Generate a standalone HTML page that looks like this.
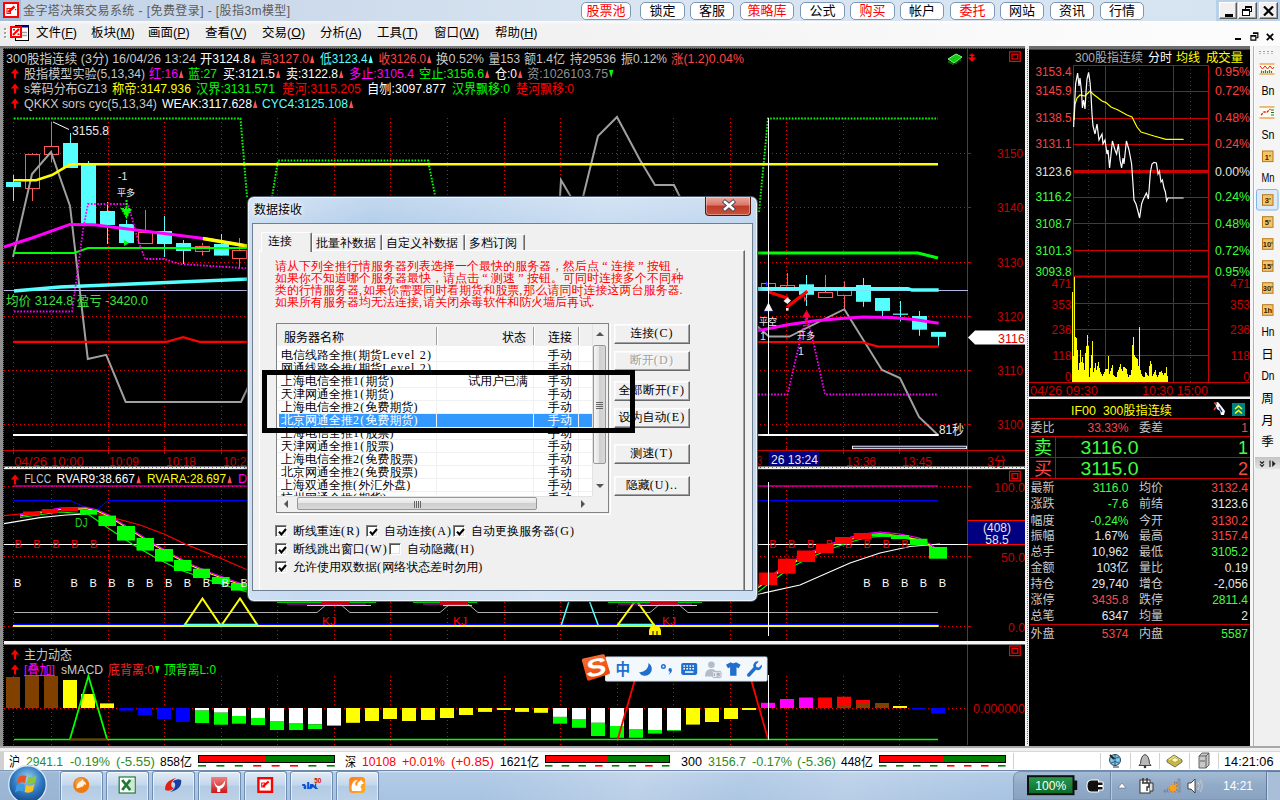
<!DOCTYPE html>
<html lang="zh-CN"><head><meta charset="utf-8"><title>金字塔决策交易系统</title>
<style>
html,body{margin:0;padding:0}
body{width:1280px;height:800px;overflow:hidden;position:relative;background:#000;font-family:"Liberation Sans","Noto Sans CJK SC",sans-serif}
.abs{position:absolute}
i.abs{display:block}

#tb{position:absolute;z-index:3;left:0;top:0;width:1280px;height:21px;background:linear-gradient(90deg,#c2d2e7 0,#ccdaeb 300px,#d9e5f1 640px,#d6e3f1 1216px,#b9d0e9 1216px,#b9d0e9 1280px)}
.ttl{font-size:12px;color:#5c5c5c;line-height:21px;white-space:nowrap;letter-spacing:0.42px}
.tbtn{top:1.5px;height:16px;border:1px solid #7d97b5;border-radius:5px;background:#fff;font-size:13px;line-height:16px;text-align:center;color:#000;white-space:nowrap}
.tbtn.red{color:#f00}
.wc{top:2px;width:18px;height:17px;box-sizing:border-box;border:1px solid;border-color:#fff #5a5a5a #5a5a5a #fff;background:#f0f0f0;box-shadow:inset -1px -1px 0 #a0a0a0}
.wc i{position:absolute;display:block}
#mb{position:absolute;z-index:3;left:0;top:21px;width:1280px;height:25px;background:linear-gradient(rgba(255,255,255,.7) 0,rgba(255,255,255,0) 4px),linear-gradient(90deg,#ededed 0,#f2f2f2 45%,#fbfbfb 85%,#fcfcfc 100%);box-sizing:border-box}
.mi{top:0;font-size:12.5px;line-height:25px;color:#000;white-space:nowrap}

#dlg{position:absolute;z-index:3;left:247px;top:196px;width:511px;height:406px;box-sizing:border-box;border:1px solid #4a5a6a;border-radius:7px;
 background:linear-gradient(100deg,rgba(255,255,255,.35) 0,rgba(255,255,255,0) 22%,rgba(255,255,255,.28) 62%,rgba(255,255,255,.1) 100%),linear-gradient(180deg,#c3d8ef 0,#b4cfeb 26px,#bcd3ec 200px,#c6daf0 405px);box-shadow:inset 0 0 0 1px #eef5fc, 0 0 6px rgba(0,0,0,.5)}
.dt{left:6px;top:6px;font:12px/15px "Liberation Sans","Noto Sans CJK SC",sans-serif;color:#000;text-shadow:0 0 6px #fff,0 0 6px #fff}
.dx{left:457px;top:0px;width:46px;height:19px;border:1px solid #4b1a14;border-top:0;border-radius:0 0 4px 4px;box-sizing:border-box;
 background:linear-gradient(#e9a99b 0,#d9766a 45%,#c23a28 50%,#c8543a 100%);box-shadow:inset 0 0 0 1px rgba(255,255,255,.35);overflow:hidden}
.dx svg{position:absolute;left:-1px;top:-1px}
#dc{position:absolute;left:4px;top:26px;width:499px;height:366px;background:#f0f0f0;border:1px solid #6f7f90;overflow:hidden;box-sizing:content-box;
 font-family:"Liberation Serif","WenQuanYi Zen Hei Sharp","Noto Serif CJK SC",serif;font-size:12px;color:#000}
.page{background:#f0f0f0;border:1px solid;border-color:#fff #696969 #696969 #fff;box-sizing:border-box;box-shadow:inset -1px -1px 0 #a0a0a0}
.tab{border:1px solid;border-color:#fff #696969 #f0f0f0 #fff;border-bottom:0;background:#f0f0f0;box-sizing:border-box;box-shadow:inset -1px 0 0 #a0a0a0;border-radius:2px 2px 0 0}
.tab.act{background:#f0f0f0;z-index:2}
.tab span{position:absolute;white-space:nowrap;line-height:13px}
.rt{color:#f00;line-height:11.9px;white-space:nowrap;font-size:12px;letter-spacing:0px}
.lv{border:1px solid #828282;background:#fff;overflow:hidden;box-shadow:0 0 0 1px #f0f0f0, 1px 1px 0 1px #fff}
.lh{background:#f0f0f0;border-bottom:1px solid #fff;box-sizing:border-box}
.s{white-space:nowrap;line-height:13px}
.hd{font-family:"Liberation Sans","Noto Sans CJK SC",sans-serif;font-size:12px}
.row{left:0;width:315px;overflow:hidden}
.vs{background:#f0f0f0;border-left:1px solid #e3e3e3;box-sizing:border-box}
.hs{background:#f0f0f0;border-top:1px solid #e3e3e3;box-sizing:border-box}
.arr{width:0;height:0;display:block}
.thumb{border:1px solid #979797;border-radius:2px;background:linear-gradient(90deg,#f5f5f5,#e3e3e3 50%,#cfcfcf 50%,#d8d8d8);box-sizing:border-box}
.thumbh{border:1px solid #979797;border-radius:2px;background:linear-gradient(#f5f5f5,#e3e3e3 50%,#cfcfcf 50%,#d8d8d8);box-sizing:border-box}
.btn{width:76px;height:20px;box-sizing:border-box;background:#f0f0f0;border:1px solid;border-color:#fff #696969 #696969 #fff;box-shadow:inset -1px -1px 0 #a0a0a0,inset 1px 1px 0 #f8f8f8;
 text-align:center;line-height:17px;white-space:nowrap}
.btn.dis{color:#a0a0a0;text-shadow:1px 1px 0 #fff}
.a{letter-spacing:1.2px}
.q{display:inline-block;width:12px;text-align:center}
.cb{height:13px;white-space:nowrap}
.cb .box{position:absolute;left:0;top:0;width:10px;height:10px;border:1px solid;border-color:#808080 #fff #fff #808080;background:#fff;box-shadow:inset 1px 1px 0 #505050,inset -1px -1px 0 #e0e0e0}
.cb .lbl{position:absolute;left:18px;top:0px;line-height:13px}
#ann{position:absolute;z-index:4;left:262px;top:370px;width:363px;height:53px;border:5px solid #000;background:transparent;overflow:hidden;
 font-family:"Liberation Serif","WenQuanYi Zen Hei Sharp","Noto Serif CJK SC",serif;font-size:12px;color:#000;box-sizing:content-box}
.row.sel{background:#3399ff;color:#fff;left:2px;width:313px}
.row.sel .s{margin-left:-2px}

#tk{position:absolute;z-index:3;left:0;top:770px;width:1280px;height:30px;background:linear-gradient(115deg,rgba(255,255,255,0) 38%,rgba(255,255,255,.22) 50%,rgba(255,255,255,.05) 58%,rgba(255,255,255,.18) 66%,rgba(255,255,255,0) 78%),linear-gradient(#dbe7f3 0,#b3cbe6 2px,#adc7e4 50%,#a8c3e1 100%);border-top:1px solid #6d89ab;box-sizing:border-box}
.tkb{top:0;width:43px;height:30px;box-sizing:border-box;border:1px solid #6f8db3;border-bottom:0;border-radius:3px 3px 0 0;background:linear-gradient(#e0ebf6,#c3d6ea 45%,#b3cbe4 50%,#bcd2e8);box-shadow:inset 0 0 0 1px rgba(255,255,255,.6)}
</style></head>
<body>
<svg class="abs" style="left:0;top:0;z-index:1" width="1280" height="800" viewBox="0 0 1280 800" font-family='"Liberation Sans","Noto Sans CJK SC",sans-serif' font-size="13">
<rect x="0" y="46" width="1280" height="701" fill="#000"/>
<rect x="0" y="46" width="3" height="701" fill="#909090"/>
<rect x="0" y="45.7" width="1253" height="2.6" fill="#787878"/>
<rect x="1029" y="46" width="221" height="3.6" fill="#6e6e6e"/>
<line x1="3" y1="48.5" x2="1027" y2="48.5" stroke="#ff2020" stroke-width="1" stroke-dasharray="1 1"/>
<line x1="3.5" y1="48" x2="3.5" y2="745" stroke="#ff2020" stroke-width="1" stroke-dasharray="1 1"/>
<line x1="967.5" y1="49" x2="967.5" y2="745" stroke="#e00000" stroke-width="1" />
<rect x="4" y="466.5" width="1022" height="2.7" fill="#f0f0f0"/>
<line x1="4" y1="467.5" x2="1025" y2="467.5" stroke="#ff2020" stroke-width="1" stroke-dasharray="1 3"/>
<rect x="4" y="641" width="1022" height="3.5" fill="#f4f4f4"/>
<rect x="1025" y="46" width="4" height="701" fill="#f0f0f0"/>
<line x1="1027.5" y1="49" x2="1027.5" y2="745" stroke="#ff2020" stroke-width="1" stroke-dasharray="1 1"/>
<rect x="1028.5" y="396.5" width="224" height="2.5" fill="#f0f0f0"/>
<rect x="1250" y="46" width="3.4" height="701" fill="#f6f6f6"/>
<line x1="1253.7" y1="46" x2="1253.7" y2="747" stroke="#c4c4c4" stroke-width="1" />
<text x="6" y="63" fill="#c8c8c8" textLength="190" lengthAdjust="spacingAndGlyphs">300股指连续 (3分) 16/04/26 13:24</text>
<text x="200" y="63" fill="#fff" textLength="50" lengthAdjust="spacingAndGlyphs">开3124.8</text>
<path d="M251 63 l2.2 -8 l2.2 8 z" fill="#ff5050"/>
<text x="260" y="63" fill="#ff4646" textLength="49" lengthAdjust="spacingAndGlyphs">高3127.0</text>
<path d="M310 63 l2.2 -8 l2.2 8 z" fill="#ff5050"/>
<text x="320" y="63" fill="#55ffff" textLength="47.5" lengthAdjust="spacingAndGlyphs">低3123.4</text>
<path d="M368.5 63 l2.2 -8 l2.2 8 z" fill="#55ffff"/>
<text x="378.5" y="63" fill="#ff4646" textLength="47.5" lengthAdjust="spacingAndGlyphs">收3126.0</text>
<path d="M427 63 l2.2 -8 l2.2 8 z" fill="#ff5050"/>
<text x="436" y="63" fill="#c8c8c8" textLength="48" lengthAdjust="spacingAndGlyphs">换0.52%</text>
<text x="488.5" y="63" fill="#c8c8c8" textLength="31.5" lengthAdjust="spacingAndGlyphs">量153</text>
<text x="524" y="63" fill="#c8c8c8" textLength="41" lengthAdjust="spacingAndGlyphs">额1.4亿</text>
<text x="570" y="63" fill="#c8c8c8" textLength="46" lengthAdjust="spacingAndGlyphs">持29536</text>
<text x="621" y="63" fill="#c8c8c8" textLength="46" lengthAdjust="spacingAndGlyphs">振0.12%</text>
<text x="671" y="63" fill="#ff4646" textLength="73" lengthAdjust="spacingAndGlyphs">涨(1.2)0.04%</text>
<path d="M15 78.5 v-6" stroke="#f00" stroke-width="2.2"/><path d="M10.8 73.6 l4.2 -5 l4.2 5 z" fill="#f00"/>
<text x="24" y="78" fill="#c8c8c8" textLength="121" lengthAdjust="spacingAndGlyphs">股指模型实验(5,13,34)</text>
<text x="149" y="78" fill="#ff00ff" textLength="29" lengthAdjust="spacingAndGlyphs">红:16</text>
<path d="M179 78 l2.2 -8 l2.2 8 z" fill="#ff5050"/>
<text x="188" y="78" fill="#00ff00" textLength="29" lengthAdjust="spacingAndGlyphs">蓝:27</text>
<text x="223" y="78" fill="#fff" textLength="52" lengthAdjust="spacingAndGlyphs">买:3121.5</text>
<path d="M276 78 l2.2 -8 l2.2 8 z" fill="#ff5050"/>
<text x="286" y="78" fill="#fff" textLength="52" lengthAdjust="spacingAndGlyphs">卖:3122.8</text>
<path d="M339 78 l2.2 -8 l2.2 8 z" fill="#ff5050"/>
<text x="349" y="78" fill="#ff00ff" textLength="65" lengthAdjust="spacingAndGlyphs">多止:3105.4</text>
<text x="419" y="78" fill="#00ff00" textLength="65" lengthAdjust="spacingAndGlyphs">空止:3156.6</text>
<path d="M485 78 l2.2 -8 l2.2 8 z" fill="#ff5050"/>
<text x="495" y="78" fill="#fff" textLength="22" lengthAdjust="spacingAndGlyphs">仓:0</text>
<path d="M518 78 l2.2 -8 l2.2 8 z" fill="#ff5050"/>
<text x="527" y="78" fill="#909090" textLength="81" lengthAdjust="spacingAndGlyphs">资:1026103.75</text>
<path d="M609 70 l2.2 8 l2.2 -8 z" fill="#00ff00"/>
<path d="M15 93.5 v-6" stroke="#f00" stroke-width="2.2"/><path d="M10.8 88.6 l4.2 -5 l4.2 5 z" fill="#f00"/>
<text x="24" y="93" fill="#c8c8c8" textLength="83" lengthAdjust="spacingAndGlyphs">s筹码分布GZ13</text>
<text x="112" y="93" fill="#ffff00" textLength="79" lengthAdjust="spacingAndGlyphs">称帝:3147.936</text>
<text x="196" y="93" fill="#00ff00" textLength="79" lengthAdjust="spacingAndGlyphs">汉界:3131.571</text>
<text x="282" y="93" fill="#ff0000" textLength="79" lengthAdjust="spacingAndGlyphs">楚河:3115.205</text>
<text x="367" y="93" fill="#fff" textLength="79" lengthAdjust="spacingAndGlyphs">自刎:3097.877</text>
<text x="452" y="93" fill="#00ff00" textLength="58" lengthAdjust="spacingAndGlyphs">汉界飘移:0</text>
<text x="516" y="93" fill="#ff0000" textLength="58" lengthAdjust="spacingAndGlyphs">楚河飘移:0</text>
<path d="M15 108.5 v-6" stroke="#f00" stroke-width="2.2"/><path d="M10.8 103.6 l4.2 -5 l4.2 5 z" fill="#f00"/>
<text x="24" y="108" fill="#c8c8c8" textLength="133" lengthAdjust="spacingAndGlyphs">QKKX sors cyc(5,13,34)</text>
<text x="162" y="108" fill="#fff" textLength="90" lengthAdjust="spacingAndGlyphs">WEAK:3117.628</text>
<path d="M253 108 l2.2 -8 l2.2 8 z" fill="#ff5050"/>
<text x="262" y="108" fill="#55ffff" textLength="86" lengthAdjust="spacingAndGlyphs">CYC4:3125.108</text>
<path d="M349 108 l2.2 -8 l2.2 8 z" fill="#ff5050"/>
<g transform="translate(947,52)"><path d="M1 7 L9 2 L15 5 L7 11 Z" fill="#1c1" stroke="#7f7" stroke-width="1"/><path d="M2 9 l0 2 M4 10 l0 2 M6 11 l0 2 M9 10 l0 2 M11 8.5 l0 2 M13 7 l0 2" stroke="#0c0"/></g>
<path d="M972 53.5 v6 M969.5 55.3 h5" stroke="#f00" stroke-width="1.6"/><path d="M968 57.6 h8 l-4 4.4 z" fill="#f00"/>
<rect x="1009.6" y="51.8" width="10.6" height="9.6" fill="none" stroke="#ff0000" stroke-width="1.2"/>
<rect x="1012" y="54.2" width="5.8" height="4.8" fill="none" stroke="#ff0000" stroke-width="1.2"/>
<line x1="13.5" y1="118" x2="13.5" y2="451" stroke="#e60000" stroke-width="1" stroke-dasharray="1 3"/>
<line x1="51.5" y1="118" x2="51.5" y2="451" stroke="#e60000" stroke-width="1" stroke-dasharray="1 3"/>
<line x1="108.5" y1="118" x2="108.5" y2="451" stroke="#e60000" stroke-width="1" stroke-dasharray="1 3"/>
<line x1="164.5" y1="118" x2="164.5" y2="451" stroke="#e60000" stroke-width="1" stroke-dasharray="1 3"/>
<line x1="221.5" y1="118" x2="221.5" y2="451" stroke="#e60000" stroke-width="1" stroke-dasharray="1 3"/>
<line x1="277.5" y1="118" x2="277.5" y2="451" stroke="#e60000" stroke-width="1" stroke-dasharray="1 3"/>
<line x1="334.5" y1="118" x2="334.5" y2="451" stroke="#e60000" stroke-width="1" stroke-dasharray="1 3"/>
<line x1="390.5" y1="118" x2="390.5" y2="451" stroke="#e60000" stroke-width="1" stroke-dasharray="1 3"/>
<line x1="447.5" y1="118" x2="447.5" y2="451" stroke="#e60000" stroke-width="1" stroke-dasharray="1 3"/>
<line x1="504.5" y1="118" x2="504.5" y2="451" stroke="#e60000" stroke-width="1" stroke-dasharray="1 3"/>
<line x1="560.5" y1="118" x2="560.5" y2="451" stroke="#e60000" stroke-width="1" stroke-dasharray="1 3"/>
<line x1="617.5" y1="118" x2="617.5" y2="451" stroke="#e60000" stroke-width="1" stroke-dasharray="1 3"/>
<line x1="673.5" y1="118" x2="673.5" y2="451" stroke="#e60000" stroke-width="1" stroke-dasharray="1 3"/>
<line x1="730.5" y1="118" x2="730.5" y2="451" stroke="#e60000" stroke-width="1" stroke-dasharray="1 3"/>
<line x1="786.5" y1="118" x2="786.5" y2="451" stroke="#e60000" stroke-width="1" stroke-dasharray="1 3"/>
<line x1="843.5" y1="118" x2="843.5" y2="451" stroke="#e60000" stroke-width="1" stroke-dasharray="1 3"/>
<line x1="899.5" y1="118" x2="899.5" y2="451" stroke="#e60000" stroke-width="1" stroke-dasharray="1 3"/>
<line x1="4" y1="153.5" x2="968" y2="153.5" stroke="#e60000" stroke-width="1" stroke-dasharray="1 3"/>
<text x="997" y="158" fill="#c80000" textLength="26" lengthAdjust="spacingAndGlyphs">3150</text>
<line x1="967" y1="153.5" x2="971" y2="153.5" stroke="#c80000" stroke-width="1" />
<line x1="4" y1="207.5" x2="968" y2="207.5" stroke="#e60000" stroke-width="1" stroke-dasharray="1 3"/>
<text x="997" y="212" fill="#c80000" textLength="26" lengthAdjust="spacingAndGlyphs">3140</text>
<line x1="967" y1="207.5" x2="971" y2="207.5" stroke="#c80000" stroke-width="1" />
<line x1="4" y1="262.5" x2="968" y2="262.5" stroke="#e60000" stroke-width="1" stroke-dasharray="1 3"/>
<text x="997" y="267" fill="#c80000" textLength="26" lengthAdjust="spacingAndGlyphs">3130</text>
<line x1="967" y1="262.5" x2="971" y2="262.5" stroke="#c80000" stroke-width="1" />
<line x1="4" y1="316.5" x2="968" y2="316.5" stroke="#e60000" stroke-width="1" stroke-dasharray="1 3"/>
<text x="997" y="321" fill="#c80000" textLength="26" lengthAdjust="spacingAndGlyphs">3120</text>
<line x1="967" y1="316.5" x2="971" y2="316.5" stroke="#c80000" stroke-width="1" />
<line x1="4" y1="370.5" x2="968" y2="370.5" stroke="#e60000" stroke-width="1" stroke-dasharray="1 3"/>
<text x="997" y="375" fill="#c80000" textLength="26" lengthAdjust="spacingAndGlyphs">3110</text>
<line x1="967" y1="370.5" x2="971" y2="370.5" stroke="#c80000" stroke-width="1" />
<line x1="4" y1="424.5" x2="968" y2="424.5" stroke="#e60000" stroke-width="1" stroke-dasharray="1 3"/>
<text x="997" y="429" fill="#c80000" textLength="26" lengthAdjust="spacingAndGlyphs">3100</text>
<line x1="967" y1="424.5" x2="971" y2="424.5" stroke="#c80000" stroke-width="1" />
<line x1="4" y1="450.5" x2="1025" y2="450.5" stroke="#c80000" stroke-width="1" />
<line x1="13.5" y1="448" x2="13.5" y2="454" stroke="#c80000" stroke-width="1" />
<line x1="108.5" y1="448" x2="108.5" y2="454" stroke="#c80000" stroke-width="1" />
<line x1="164.5" y1="448" x2="164.5" y2="454" stroke="#c80000" stroke-width="1" />
<line x1="221.5" y1="448" x2="221.5" y2="454" stroke="#c80000" stroke-width="1" />
<line x1="277.5" y1="448" x2="277.5" y2="454" stroke="#c80000" stroke-width="1" />
<line x1="334.5" y1="448" x2="334.5" y2="454" stroke="#c80000" stroke-width="1" />
<line x1="390.5" y1="448" x2="390.5" y2="454" stroke="#c80000" stroke-width="1" />
<line x1="447.5" y1="448" x2="447.5" y2="454" stroke="#c80000" stroke-width="1" />
<line x1="504.5" y1="448" x2="504.5" y2="454" stroke="#c80000" stroke-width="1" />
<line x1="560.5" y1="448" x2="560.5" y2="454" stroke="#c80000" stroke-width="1" />
<line x1="617.5" y1="448" x2="617.5" y2="454" stroke="#c80000" stroke-width="1" />
<line x1="673.5" y1="448" x2="673.5" y2="454" stroke="#c80000" stroke-width="1" />
<line x1="730.5" y1="448" x2="730.5" y2="454" stroke="#c80000" stroke-width="1" />
<line x1="786.5" y1="448" x2="786.5" y2="454" stroke="#c80000" stroke-width="1" />
<line x1="843.5" y1="448" x2="843.5" y2="454" stroke="#c80000" stroke-width="1" />
<line x1="899.5" y1="448" x2="899.5" y2="454" stroke="#c80000" stroke-width="1" />
<text x="14" y="465.6" fill="#c80000" textLength="70" lengthAdjust="spacingAndGlyphs">04/26 10:00</text>
<text x="109" y="465.6" fill="#c80000" textLength="30" lengthAdjust="spacingAndGlyphs">10:09</text>
<text x="166" y="465.6" fill="#c80000" textLength="30" lengthAdjust="spacingAndGlyphs">10:18</text>
<text x="223" y="465.6" fill="#c80000" textLength="30" lengthAdjust="spacingAndGlyphs">10:27</text>
<text x="846" y="465.6" fill="#c80000" textLength="30" lengthAdjust="spacingAndGlyphs">13:36</text>
<text x="902" y="465.6" fill="#c80000" textLength="30" lengthAdjust="spacingAndGlyphs">13:45</text>
<text x="987" y="465.6" fill="#c80000" textLength="19" lengthAdjust="spacingAndGlyphs">3分</text>
<rect x="768.6" y="451" width="51" height="15" fill="#000080"/>
<text x="771" y="464" fill="#e8e8e8" textLength="47" lengthAdjust="spacingAndGlyphs">26 13:24</text>
<text x="757" y="465" fill="#c80000" textLength="5" lengthAdjust="spacingAndGlyphs">3</text>
<line x1="13.5" y1="175" x2="13.5" y2="201" stroke="#55ffff" stroke-width="1" />
<rect x="6" y="182" width="15" height="5" fill="#55ffff"/>
<line x1="32.5" y1="153" x2="32.5" y2="154.5" stroke="#ff5a5a" stroke-width="1" />
<line x1="32.5" y1="188.5" x2="32.5" y2="201" stroke="#ff5a5a" stroke-width="1" />
<rect x="25.5" y="154.5" width="14" height="34" fill="none" stroke="#ff5a5a" stroke-width="1"/>
<line x1="51.5" y1="121.6" x2="51.5" y2="146.5" stroke="#ff5a5a" stroke-width="1" />
<line x1="51.5" y1="154.5" x2="51.5" y2="162" stroke="#ff5a5a" stroke-width="1" />
<rect x="44.5" y="146.5" width="14" height="8" fill="none" stroke="#ff5a5a" stroke-width="1"/>
<line x1="70.5" y1="133" x2="70.5" y2="168" stroke="#55ffff" stroke-width="1" />
<rect x="63" y="143" width="15" height="25" fill="#55ffff"/>
<line x1="88.5" y1="161" x2="88.5" y2="224" stroke="#55ffff" stroke-width="1" />
<rect x="81" y="163" width="15" height="61" fill="#55ffff"/>
<line x1="107.5" y1="202" x2="107.5" y2="244" stroke="#55ffff" stroke-width="1" />
<rect x="100" y="211" width="15" height="14" fill="#55ffff"/>
<line x1="126.5" y1="220" x2="126.5" y2="243" stroke="#55ffff" stroke-width="1" />
<rect x="119" y="224" width="15" height="19" fill="#55ffff"/>
<line x1="145.5" y1="210" x2="145.5" y2="232" stroke="#ff5a5a" stroke-width="1" />
<rect x="138.5" y="232.5" width="14" height="11" fill="none" stroke="#ff5a5a" stroke-width="1"/>
<line x1="164.5" y1="216" x2="164.5" y2="257" stroke="#55ffff" stroke-width="1" />
<rect x="157" y="231" width="15" height="13" fill="#55ffff"/>
<line x1="183.5" y1="240" x2="183.5" y2="264" stroke="#55ffff" stroke-width="1" />
<rect x="176" y="243" width="15" height="8" fill="#55ffff"/>
<line x1="202.5" y1="243" x2="202.5" y2="245.5" stroke="#ff5a5a" stroke-width="1" />
<line x1="202.5" y1="250.5" x2="202.5" y2="255.6" stroke="#ff5a5a" stroke-width="1" />
<rect x="195.5" y="246.5" width="14" height="5" fill="none" stroke="#ff5a5a" stroke-width="1"/>
<line x1="221.5" y1="234" x2="221.5" y2="255.6" stroke="#55ffff" stroke-width="1" />
<rect x="214" y="244" width="15" height="11.6" fill="#55ffff"/>
<line x1="239.5" y1="238" x2="239.5" y2="250" stroke="#ff5a5a" stroke-width="1" />
<line x1="239.5" y1="258" x2="239.5" y2="268.7" stroke="#ff5a5a" stroke-width="1" />
<rect x="232.5" y="250.5" width="14" height="8" fill="none" stroke="#ff5a5a" stroke-width="1"/>
<line x1="768.5" y1="281" x2="768.5" y2="283.3" stroke="#ff5a5a" stroke-width="1" />
<rect x="761.5" y="283.5" width="14" height="5" fill="none" stroke="#ff5a5a" stroke-width="1"/>
<line x1="787.5" y1="273" x2="787.5" y2="285.4" stroke="#ff5a5a" stroke-width="1" />
<rect x="780.5" y="285.5" width="14" height="2" fill="none" stroke="#ff5a5a" stroke-width="1"/>
<line x1="806.5" y1="275" x2="806.5" y2="306" stroke="#55ffff" stroke-width="1" />
<rect x="799" y="284.3" width="15" height="10.5" fill="#55ffff"/>
<line x1="825.5" y1="275" x2="825.5" y2="292.3" stroke="#ff5a5a" stroke-width="1" />
<rect x="818.5" y="292.5" width="14" height="5" fill="none" stroke="#ff5a5a" stroke-width="1"/>
<line x1="844.5" y1="281.3" x2="844.5" y2="290.4" stroke="#ff5a5a" stroke-width="1" />
<line x1="844.5" y1="295.6" x2="844.5" y2="309.2" stroke="#ff5a5a" stroke-width="1" />
<rect x="837.5" y="290.5" width="14" height="5" fill="none" stroke="#ff5a5a" stroke-width="1"/>
<line x1="863.5" y1="278" x2="863.5" y2="306.8" stroke="#55ffff" stroke-width="1" />
<rect x="856" y="285" width="15" height="16.8" fill="#55ffff"/>
<line x1="882.5" y1="298" x2="882.5" y2="316.6" stroke="#55ffff" stroke-width="1" />
<rect x="875" y="298" width="15" height="12.9" fill="#55ffff"/>
<line x1="900.5" y1="301" x2="900.5" y2="321.5" stroke="#55ffff" stroke-width="1" />
<rect x="893" y="313.6" width="15" height="1.2" fill="#55ffff"/>
<line x1="919.5" y1="311" x2="919.5" y2="335.8" stroke="#55ffff" stroke-width="1" />
<rect x="912" y="316" width="15" height="13.7" fill="#55ffff"/>
<line x1="938.5" y1="331.9" x2="938.5" y2="346" stroke="#55ffff" stroke-width="1" />
<rect x="931" y="331.9" width="15" height="4.9" fill="#55ffff"/>
<polyline points="13,257 32,174 51,152 70,206 87.8,359 106.2,354.8 125.7,402 241,402 250,383" fill="none" stroke="#a0a0a0" stroke-width="2" />
<polyline points="560,197 561,180 571,197" fill="none" stroke="#a0a0a0" stroke-width="2" />
<polyline points="583,197 598,136 617,117 640,160 655,185 674,185 680,197" fill="none" stroke="#a0a0a0" stroke-width="2" />
<polyline points="757,326 769,336.6 789.4,336.6 844.3,309.2 882,370 900,378 919,417 938,435" fill="none" stroke="#a0a0a0" stroke-width="2" />
<line x1="4" y1="290.5" x2="968" y2="290.5" stroke="#b8b8e8" stroke-width="1" />
<polyline points="14,118.5 240.5,118.5 247,197" fill="none" stroke="#00ff00" stroke-width="2" stroke-dasharray="1.6 1.5"/>
<polyline points="272,197 278,160.5 428,160.5 436,200" fill="none" stroke="#00ff00" stroke-width="2" stroke-dasharray="1.6 1.5"/>
<polyline points="759,212 768,118.5 938,118.5" fill="none" stroke="#00ff00" stroke-width="2" stroke-dasharray="1.6 1.5"/>
<polyline points="13,180.3 36,180.3 52,175 70,164.3 938,164.3" fill="none" stroke="#ffff00" stroke-width="2.6" />
<polyline points="13,253 74,253 88,248 250,248" fill="none" stroke="#00ff00" stroke-width="2" />
<polyline points="755,253 918,253 938,258" fill="none" stroke="#00ff00" stroke-width="3" />
<polyline points="14,291 60,287 250,279" fill="none" stroke="#55ffff" stroke-width="3.4" />
<polyline points="755,288.7 908,288.7 912,290 938.7,290" fill="none" stroke="#55ffff" stroke-width="3.4" />
<polyline points="14,311.5 72,311.5 78,268 83,230 88,204 128,204 138,240 145,259 164,259 180,264 250,268.5" fill="none" stroke="#ff00ff" stroke-width="1.8" stroke-dasharray="1.6 1.6"/>
<polyline points="755,394.5 787.5,394.5 799,345 806.5,316 814,345 825,394.5 938,394.5" fill="none" stroke="#ff00ff" stroke-width="1.8" stroke-dasharray="1.6 1.6"/>
<polyline points="4,247 32,238 70,224.4 94,224.8 200,238 250,246.5" fill="none" stroke="#ff00ff" stroke-width="3" />
<polyline points="203,238.5 250,246.5" fill="none" stroke="#ffff00" stroke-width="3.5" />
<polyline points="755,331.3 787.7,324.8 815.6,320.7 844.3,318.2 863,317 891,317.4 914,319.4 938.7,323.2" fill="none" stroke="#ff00ff" stroke-width="3" />
<polyline points="13,341.8 166.7,341.8 183,337.2 199.7,341.8 250,341.8" fill="none" stroke="#ff0000" stroke-width="2.2" />
<polyline points="755,342 861.6,342 878,346.6 938.7,346.6" fill="none" stroke="#ff0000" stroke-width="2.2" />
<line x1="13" y1="435" x2="938.7" y2="435" stroke="#fff" stroke-width="2.2" />
<line x1="53" y1="122" x2="69" y2="129.5" stroke="#fff" stroke-width="1" />
<text x="72" y="135" fill="#e8e8e8" textLength="37" lengthAdjust="spacingAndGlyphs">3155.8</text>
<text x="118" y="179.5" fill="#e8e8e8" font-size="10.5">-1</text>
<text x="117" y="195.5" fill="#e8e8e8" font-size="9.5" textLength="18" lengthAdjust="spacingAndGlyphs">平多</text>
<path d="M126.5 200 v10 M122 209 h9 l-4.5 8 z" stroke="#00ff00" stroke-width="2" fill="#00ff00" stroke-dasharray="2 1"/>
<path d="M124 240 l5 3 l-5 3 z" fill="#00ff00"/>
<text x="6" y="304.5" fill="#40e040" textLength="142" lengthAdjust="spacingAndGlyphs">均价 3124.8 盈亏 -3420.0</text>
<polyline points="769,292 788.5,298.6" fill="none" stroke="#ff0000" stroke-width="3.2" />
<polyline points="787.4,306.8 807.4,291.2" fill="none" stroke="#ff0000" stroke-width="3.2" />
<path d="M783.5 301 l4 -3.5 l3.5 3 l-3.5 3.5 z" fill="#f0f0f0"/><rect x="786" y="308" width="2.6" height="2.6" fill="#f0f0f0"/>
<path d="M768.5 302.3 l4.5 9 h-9 z" fill="#f0f0f0"/><path d="M764 311.6 h9.5" stroke="#0000ff" stroke-width="1.4"/><path d="M766 281 l2.5 3 l-2.5 3 z" fill="#22f"/>
<path d="M804 296 l3 3 l-3 3 z" fill="#ff3030"/>
<text x="759" y="325" fill="#e8e8e8" font-size="9.5" textLength="18" lengthAdjust="spacingAndGlyphs">平空</text>
<text x="760" y="339.6" fill="#e8e8e8" font-size="10.5">1</text>
<path d="M806.5 326 v-9" stroke="#ff0030" stroke-width="3" stroke-dasharray="1.6 1"/><path d="M806.5 310 l4.5 7.5 h-9 z" fill="#ff0030"/>
<text x="797" y="339.4" fill="#e8e8e8" font-size="9.5" textLength="18" lengthAdjust="spacingAndGlyphs">开多</text>
<text x="798" y="354.8" fill="#e8e8e8" font-size="10.5">1</text>
<text x="939" y="433.5" fill="#e8e8e8" textLength="25" lengthAdjust="spacingAndGlyphs">81秒</text>
<rect x="852.5" y="446.2" width="114" height="2.5" fill="#283090" stroke="#fff" stroke-width="0.9"/>
<path d="M968 337.5 l7 -7 h50 v14 h-50 z" fill="#fff"/>
<text x="998" y="343" fill="#e00000" textLength="27" lengthAdjust="spacingAndGlyphs">3116</text>
<line x1="13.5" y1="486" x2="13.5" y2="640" stroke="#e60000" stroke-width="1" stroke-dasharray="1 3"/>
<line x1="51.5" y1="486" x2="51.5" y2="640" stroke="#e60000" stroke-width="1" stroke-dasharray="1 3"/>
<line x1="108.5" y1="486" x2="108.5" y2="640" stroke="#e60000" stroke-width="1" stroke-dasharray="1 3"/>
<line x1="164.5" y1="486" x2="164.5" y2="640" stroke="#e60000" stroke-width="1" stroke-dasharray="1 3"/>
<line x1="221.5" y1="486" x2="221.5" y2="640" stroke="#e60000" stroke-width="1" stroke-dasharray="1 3"/>
<line x1="277.5" y1="486" x2="277.5" y2="640" stroke="#e60000" stroke-width="1" stroke-dasharray="1 3"/>
<line x1="334.5" y1="486" x2="334.5" y2="640" stroke="#e60000" stroke-width="1" stroke-dasharray="1 3"/>
<line x1="390.5" y1="486" x2="390.5" y2="640" stroke="#e60000" stroke-width="1" stroke-dasharray="1 3"/>
<line x1="447.5" y1="486" x2="447.5" y2="640" stroke="#e60000" stroke-width="1" stroke-dasharray="1 3"/>
<line x1="504.5" y1="486" x2="504.5" y2="640" stroke="#e60000" stroke-width="1" stroke-dasharray="1 3"/>
<line x1="560.5" y1="486" x2="560.5" y2="640" stroke="#e60000" stroke-width="1" stroke-dasharray="1 3"/>
<line x1="617.5" y1="486" x2="617.5" y2="640" stroke="#e60000" stroke-width="1" stroke-dasharray="1 3"/>
<line x1="673.5" y1="486" x2="673.5" y2="640" stroke="#e60000" stroke-width="1" stroke-dasharray="1 3"/>
<line x1="730.5" y1="486" x2="730.5" y2="640" stroke="#e60000" stroke-width="1" stroke-dasharray="1 3"/>
<line x1="786.5" y1="486" x2="786.5" y2="640" stroke="#e60000" stroke-width="1" stroke-dasharray="1 3"/>
<line x1="843.5" y1="486" x2="843.5" y2="640" stroke="#e60000" stroke-width="1" stroke-dasharray="1 3"/>
<line x1="899.5" y1="486" x2="899.5" y2="640" stroke="#e60000" stroke-width="1" stroke-dasharray="1 3"/>
<line x1="4" y1="486.5" x2="968" y2="486.5" stroke="#e60000" stroke-width="1" stroke-dasharray="1 3"/>
<line x1="967" y1="486.5" x2="971" y2="486.5" stroke="#c80000" stroke-width="1" />
<line x1="4" y1="556.5" x2="968" y2="556.5" stroke="#e60000" stroke-width="1" stroke-dasharray="1 3"/>
<line x1="967" y1="556.5" x2="971" y2="556.5" stroke="#c80000" stroke-width="1" />
<line x1="4" y1="626.5" x2="968" y2="626.5" stroke="#e60000" stroke-width="1" stroke-dasharray="1 3"/>
<line x1="967" y1="626.5" x2="971" y2="626.5" stroke="#c80000" stroke-width="1" />
<text x="994" y="491.5" fill="#c80000" textLength="31" lengthAdjust="spacingAndGlyphs">100.0</text>
<text x="1001" y="561.5" fill="#c80000" textLength="24" lengthAdjust="spacingAndGlyphs">50.0</text>
<text x="1008" y="631.5" fill="#c80000" textLength="17" lengthAdjust="spacingAndGlyphs">0.0</text>
<path d="M15 484.5 v-6" stroke="#f00" stroke-width="2.2"/><path d="M10.8 479.6 l4.2 -5 l4.2 5 z" fill="#f00"/>
<text x="24.4" y="483.3" fill="#c8c8c8" textLength="26.6" lengthAdjust="spacingAndGlyphs">FLCC</text>
<text x="56.6" y="483.3" fill="#fff" textLength="78.4" lengthAdjust="spacingAndGlyphs">RVAR9:38.667</text>
<path d="M136.5 483.3 l2.2 -8 l2.2 8 z" fill="#ff5050"/>
<text x="147" y="483.3" fill="#ffff00" textLength="79" lengthAdjust="spacingAndGlyphs">RVARA:28.697</text>
<path d="M227.5 483.3 l2.2 -8 l2.2 8 z" fill="#ff5050"/>
<text x="238" y="483.3" fill="#ff00ff">D</text>
<line x1="13" y1="486" x2="938" y2="486" stroke="#ff00ff" stroke-width="1.2" />
<polyline points="14,500.5 70,500.5 95,511.5 108,500.5 938,500.5" fill="none" stroke="#0000ff" stroke-width="1" />
<line x1="4" y1="544.5" x2="968" y2="544.5" stroke="#fff" stroke-width="1" />
<line x1="14" y1="612.5" x2="317" y2="612.5" stroke="#b0b0b0" stroke-width="1" />
<polyline points="317,612.5 327,604 340,604 350,612.5 440,612.5 450,604 468,604 478,612.5 650,612.5 660,604 678,604 688,612.5 938,612.5" fill="none" stroke="#b0b0b0" stroke-width="1" />
<polyline points="4,515.6 30,513 60,510 80,509.5 95,513 108,516.4 140,525 164,534 186,544.4 220,558 250,571" fill="none" stroke="#ff0000" stroke-width="1.2" />
<polyline points="4,523.6 40,517.6 66,515 86,514" fill="none" stroke="#fff" stroke-width="1.2" />
<polyline points="20,516 40,513 60,509.5 86,508.6 97,511 108,516 135,533 154,545 173,556 192,566 211,574 230,581 250,588" fill="none" stroke="#ffff00" stroke-width="1.2" />
<polyline points="20,514.7 40,511.7 60,508.2 86,507.3 97,509.7 108,514.7 135,531.7 154,543.7 173,554.7 192,564.7 211,572.7 230,579.7 250,586.7" fill="none" stroke="#ff00ff" stroke-width="1.2" />
<polyline points="20,517.5 60,512 88,514 108,528 132,544 156,558 180,570 215,582 250,593" fill="none" stroke="#00ff00" stroke-width="1.2" />
<rect x="23" y="511.5" width="17" height="4.1" fill="#ff0000"/>
<rect x="42" y="509" width="16" height="4" fill="#ff0000"/>
<rect x="61" y="507.5" width="17" height="4" fill="#ff0000"/>
<rect x="80" y="510" width="17" height="4.7" fill="#00ff00"/>
<rect x="98.4" y="515.6" width="17.6" height="10.4" fill="#00ff00"/>
<rect x="117" y="526" width="18" height="14.6" fill="#00ff00"/>
<rect x="136.5" y="538" width="17.5" height="12.6" fill="#00ff00"/>
<rect x="155" y="549" width="18" height="12.5" fill="#00ff00"/>
<rect x="174" y="560" width="17.5" height="11" fill="#00ff00"/>
<rect x="193" y="568.7" width="17" height="9.3" fill="#00ff00"/>
<rect x="212" y="577" width="17.7" height="7" fill="#00ff00"/>
<rect x="231" y="583" width="17" height="7.6" fill="#00ff00"/>
<text x="75" y="527.3" fill="#20d020" font-size="12" textLength="12.5" lengthAdjust="spacingAndGlyphs">DJ</text>
<text x="14.4" y="547.8" fill="#ff0000" font-size="11">B</text>
<text x="33.27" y="547.8" fill="#ff0000" font-size="11">B</text>
<text x="52.14" y="547.8" fill="#ff0000" font-size="11">B</text>
<text x="71.01" y="547.8" fill="#ff0000" font-size="11">B</text>
<text x="89.88" y="547.8" fill="#ff0000" font-size="11">B</text>
<text x="14" y="586.8" fill="#fff" font-size="11">B</text>
<text x="70.61" y="586.8" fill="#fff" font-size="11">B</text>
<text x="89.48" y="586.8" fill="#fff" font-size="11">B</text>
<text x="108.35" y="586.8" fill="#fff" font-size="11">B</text>
<text x="127.22" y="586.8" fill="#fff" font-size="11">B</text>
<text x="146.09" y="586.8" fill="#fff" font-size="11">B</text>
<text x="164.96" y="586.8" fill="#fff" font-size="11">B</text>
<text x="183.83" y="586.8" fill="#fff" font-size="11">B</text>
<text x="202.7" y="586.8" fill="#fff" font-size="11">B</text>
<text x="221.57" y="586.8" fill="#fff" font-size="11">B</text>
<text x="240.44" y="586.8" fill="#fff" font-size="11">B</text>
<line x1="13" y1="624.4" x2="938.7" y2="624.4" stroke="#0000ff" stroke-width="1.3" />
<line x1="13" y1="626" x2="938.7" y2="626" stroke="#ffff00" stroke-width="2.2" />
<polyline points="184,626 202.5,598.5 221,626 240,598.5 258,626" fill="none" stroke="#ffff00" stroke-width="2" />
<line x1="184" y1="625" x2="258" y2="625" stroke="#55ffff" stroke-width="2.4" />
<polyline points="561,626 569.4,600 589,600 598.5,626" fill="none" stroke="#55ffff" stroke-width="1.5" />
<line x1="617" y1="625" x2="655" y2="625" stroke="#55ffff" stroke-width="2.4" />
<polyline points="617,626 636,600 654.7,626" fill="none" stroke="#ffff00" stroke-width="2" />
<rect x="277" y="600.5" width="99" height="2.5" fill="#00ff00"/>
<line x1="287" y1="604" x2="366" y2="604" stroke="#ff00ff" stroke-width="1.2" />
<line x1="307" y1="605.5" x2="371" y2="605.5" stroke="#ffff00" stroke-width="1.2" />
<rect x="321.5" y="602" width="28" height="2.5" fill="#ff0000"/>
<rect x="413" y="600.5" width="64" height="2.5" fill="#00ff00"/>
<line x1="423" y1="604" x2="467" y2="604" stroke="#ff00ff" stroke-width="1.2" />
<line x1="443" y1="605.5" x2="472" y2="605.5" stroke="#ffff00" stroke-width="1.2" />
<rect x="440" y="602" width="28" height="2.5" fill="#ff0000"/>
<rect x="608" y="600.5" width="94" height="2.5" fill="#00ff00"/>
<line x1="618" y1="604" x2="692" y2="604" stroke="#ff00ff" stroke-width="1.2" />
<line x1="638" y1="605.5" x2="697" y2="605.5" stroke="#ffff00" stroke-width="1.2" />
<rect x="650" y="602" width="28" height="2.5" fill="#ff0000"/>
<text x="322" y="624.5" fill="#ff0000" font-size="11" textLength="14" lengthAdjust="spacingAndGlyphs">KJ</text>
<text x="453" y="624.5" fill="#ff0000" font-size="11" textLength="14" lengthAdjust="spacingAndGlyphs">KJ</text>
<text x="662" y="624.5" fill="#ff0000" font-size="11" textLength="14" lengthAdjust="spacingAndGlyphs">KJ</text>
<path d="M649 635 v-4 a6 6 0 0 1 12 0 v4 z" fill="#ffee00"/><path d="M653 635 v-4 M657 635 v-4" stroke="#000" stroke-width="1"/>
<polyline points="755,595 800,585 850,563 880,553 910,546.5 940,544" fill="none" stroke="#fff" stroke-width="1.2" />
<polyline points="755,590 768,580 787,566 806,556 825,548 844,541 862,536 880,534 900,536 919,540 930,546 938,552" fill="none" stroke="#ffff00" stroke-width="1.5" />
<polyline points="755,588 768,578 787,564 806,554 825,546 844,539 862,534 880,532 900,534 919,538 930,544 938,550" fill="none" stroke="#ff00ff" stroke-width="1.2" />
<polyline points="758,592 771,582 790,568 809,558 828,550 847,543 865,538 883,536 903,538 922,542 933,548 941,554" fill="none" stroke="#00ff00" stroke-width="1.2" />
<rect x="758.7" y="572.5" width="18.3" height="12.5" fill="#ff0000"/>
<rect x="778" y="558.7" width="17.7" height="15" fill="#ff0000"/>
<rect x="797" y="550.5" width="18" height="11.5" fill="#ff0000"/>
<rect x="816" y="543.7" width="17.7" height="9.3" fill="#ff0000"/>
<rect x="835" y="537" width="17.5" height="7" fill="#ff0000"/>
<rect x="853.7" y="533" width="18" height="6.5" fill="#ff0000"/>
<rect x="872" y="533.5" width="18" height="3" fill="#00ff00"/>
<rect x="891" y="535" width="18" height="4" fill="#00ff00"/>
<rect x="910" y="538.7" width="17.5" height="6.3" fill="#00ff00"/>
<rect x="929" y="547" width="18" height="11.7" fill="#00ff00"/>
<text x="769.2" y="547.8" fill="#ff0000" font-size="11">B</text>
<text x="788.07" y="547.8" fill="#ff0000" font-size="11">B</text>
<text x="806.94" y="547.8" fill="#ff0000" font-size="11">B</text>
<text x="825.81" y="547.8" fill="#ff0000" font-size="11">B</text>
<text x="844.68" y="547.8" fill="#ff0000" font-size="11">B</text>
<text x="863.55" y="547.8" fill="#ff0000" font-size="11">B</text>
<text x="882.42" y="547.8" fill="#ff0000" font-size="11">B</text>
<text x="901.29" y="547.8" fill="#ff0000" font-size="11">B</text>
<text x="863.15" y="586.8" fill="#fff" font-size="11">B</text>
<text x="882.02" y="586.8" fill="#fff" font-size="11">B</text>
<text x="900.89" y="586.8" fill="#fff" font-size="11">B</text>
<text x="919.76" y="586.8" fill="#fff" font-size="11">B</text>
<text x="938.63" y="586.8" fill="#fff" font-size="11">B</text>
<rect x="968" y="520.5" width="57" height="24" fill="#000080"/>
<line x1="968" y1="520.5" x2="1025" y2="520.5" stroke="#f00" stroke-width="1" />
<line x1="968" y1="544.5" x2="1025" y2="544.5" stroke="#f00" stroke-width="1" />
<text x="997" y="531.5" fill="#e8e8e8" font-size="12" text-anchor="middle">(408)</text>
<text x="997" y="543.5" fill="#e8e8e8" font-size="12" text-anchor="middle">58.5</text>
<rect x="1009.6" y="471.3" width="10.6" height="9.6" fill="none" stroke="#ff0000" stroke-width="1.2"/>
<rect x="1012" y="473.7" width="5.8" height="4.8" fill="none" stroke="#ff0000" stroke-width="1.2"/>
<line x1="13.5" y1="676" x2="13.5" y2="745" stroke="#e60000" stroke-width="1" stroke-dasharray="1 3"/>
<line x1="51.5" y1="676" x2="51.5" y2="745" stroke="#e60000" stroke-width="1" stroke-dasharray="1 3"/>
<line x1="108.5" y1="676" x2="108.5" y2="745" stroke="#e60000" stroke-width="1" stroke-dasharray="1 3"/>
<line x1="164.5" y1="676" x2="164.5" y2="745" stroke="#e60000" stroke-width="1" stroke-dasharray="1 3"/>
<line x1="221.5" y1="676" x2="221.5" y2="745" stroke="#e60000" stroke-width="1" stroke-dasharray="1 3"/>
<line x1="277.5" y1="676" x2="277.5" y2="745" stroke="#e60000" stroke-width="1" stroke-dasharray="1 3"/>
<line x1="334.5" y1="676" x2="334.5" y2="745" stroke="#e60000" stroke-width="1" stroke-dasharray="1 3"/>
<line x1="390.5" y1="676" x2="390.5" y2="745" stroke="#e60000" stroke-width="1" stroke-dasharray="1 3"/>
<line x1="447.5" y1="676" x2="447.5" y2="745" stroke="#e60000" stroke-width="1" stroke-dasharray="1 3"/>
<line x1="504.5" y1="676" x2="504.5" y2="745" stroke="#e60000" stroke-width="1" stroke-dasharray="1 3"/>
<line x1="560.5" y1="676" x2="560.5" y2="745" stroke="#e60000" stroke-width="1" stroke-dasharray="1 3"/>
<line x1="617.5" y1="676" x2="617.5" y2="745" stroke="#e60000" stroke-width="1" stroke-dasharray="1 3"/>
<line x1="673.5" y1="676" x2="673.5" y2="745" stroke="#e60000" stroke-width="1" stroke-dasharray="1 3"/>
<line x1="730.5" y1="676" x2="730.5" y2="745" stroke="#e60000" stroke-width="1" stroke-dasharray="1 3"/>
<line x1="786.5" y1="676" x2="786.5" y2="745" stroke="#e60000" stroke-width="1" stroke-dasharray="1 3"/>
<line x1="843.5" y1="676" x2="843.5" y2="745" stroke="#e60000" stroke-width="1" stroke-dasharray="1 3"/>
<line x1="899.5" y1="676" x2="899.5" y2="745" stroke="#e60000" stroke-width="1" stroke-dasharray="1 3"/>
<line x1="4" y1="708.5" x2="968" y2="708.5" stroke="#e60000" stroke-width="1" stroke-dasharray="1 3"/>
<path d="M15 659.5 v-6" stroke="#f00" stroke-width="2.2"/><path d="M10.8 654.6 l4.2 -5 l4.2 5 z" fill="#f00"/>
<text x="24" y="659" fill="#c8c8c8" textLength="48" lengthAdjust="spacingAndGlyphs">主力动态</text>
<path d="M15 674.5 v-6" stroke="#f00" stroke-width="2.2"/><path d="M10.8 669.6 l4.2 -5 l4.2 5 z" fill="#f00"/>
<text x="24" y="674" fill="#ff00ff" textLength="31" lengthAdjust="spacingAndGlyphs">[叠加]</text>
<line x1="24" y1="675.5" x2="55" y2="675.5" stroke="#ff00ff" stroke-width="1" />
<text x="61" y="674" fill="#c8c8c8" textLength="42" lengthAdjust="spacingAndGlyphs">sMACD</text>
<text x="108" y="674" fill="#ff2020" textLength="46" lengthAdjust="spacingAndGlyphs">底背离:0</text>
<path d="M155 666 l2.2 8 l2.2 -8 z" fill="#00ff00"/>
<text x="164" y="674" fill="#00ff00" textLength="52" lengthAdjust="spacingAndGlyphs">顶背离L:0</text>
<text x="973" y="713" fill="#c80000" textLength="52" lengthAdjust="spacingAndGlyphs">0.000000</text>
<rect x="1009.6" y="646" width="10.6" height="9.6" fill="none" stroke="#ff0000" stroke-width="1.2"/>
<rect x="1012" y="648.4" width="5.8" height="4.8" fill="none" stroke="#ff0000" stroke-width="1.2"/>
<rect x="6" y="677" width="14" height="31" fill="#804000"/>
<rect x="25" y="676" width="14" height="32" fill="#804000"/>
<rect x="44" y="676" width="14" height="32" fill="#804000"/>
<rect x="63" y="680" width="14" height="28" fill="#ffff00"/>
<rect x="81" y="694" width="14" height="14" fill="#ffff00"/>
<rect x="100" y="703.4" width="14" height="4.6" fill="#ffff00"/>
<rect x="119" y="708" width="14" height="2.6" fill="#0000ff"/>
<rect x="138" y="708" width="14" height="7" fill="#0000ff"/>
<rect x="157" y="708" width="14" height="11" fill="#0000ff"/>
<rect x="176" y="708" width="14" height="14" fill="#0000ff"/>
<rect x="195" y="708" width="14" height="2.6" fill="#fff"/>
<rect x="195" y="710.6" width="14" height="12.4" fill="#00ff00"/>
<rect x="214" y="708" width="14" height="4.7" fill="#fff"/>
<rect x="214" y="712.7" width="14" height="12" fill="#00ff00"/>
<rect x="232" y="708" width="14" height="8" fill="#fff"/>
<rect x="232" y="716" width="14" height="7.7" fill="#00ff00"/>
<rect x="251" y="708" width="14" height="10" fill="#fff"/>
<rect x="251" y="718" width="14" height="7" fill="#00ff00"/>
<rect x="270" y="708" width="14" height="13" fill="#fff"/>
<rect x="270" y="721" width="14" height="9" fill="#00ff00"/>
<rect x="289" y="708" width="14" height="15" fill="#fff"/>
<rect x="289" y="723" width="14" height="7" fill="#00ff00"/>
<rect x="308" y="708" width="14" height="16.4" fill="#fff"/>
<rect x="308" y="724.4" width="14" height="4.6" fill="#00ff00"/>
<rect x="327" y="708" width="14" height="17" fill="#fff"/>
<rect x="327" y="725" width="14" height="1" fill="#00ff00"/>
<rect x="346" y="708" width="14" height="14.8" fill="#ffff00"/>
<rect x="365" y="708" width="14" height="13" fill="#ffff00"/>
<rect x="383" y="708" width="14" height="11" fill="#ffff00"/>
<rect x="402" y="708" width="14" height="13" fill="#ffff00"/>
<rect x="421" y="708" width="14" height="12" fill="#ffff00"/>
<rect x="440" y="708" width="14" height="10" fill="#ffff00"/>
<rect x="459" y="708" width="14" height="7" fill="#ffff00"/>
<rect x="478" y="708" width="14" height="3.9" fill="#ffff00"/>
<rect x="497" y="708" width="14" height="2" fill="#ffff00"/>
<rect x="515" y="708" width="14" height="3.9" fill="#ffff00"/>
<rect x="534" y="708" width="14" height="4.8" fill="#ffff00"/>
<rect x="553" y="708" width="14" height="8.9" fill="#fff"/>
<rect x="553" y="716.9" width="14" height="6.8" fill="#00ff00"/>
<rect x="572" y="708" width="14" height="11" fill="#fff"/>
<rect x="572" y="719" width="14" height="8.8" fill="#00ff00"/>
<rect x="591" y="708" width="14" height="14.8" fill="#fff"/>
<rect x="591" y="722.8" width="14" height="13.2" fill="#00ff00"/>
<rect x="610" y="708" width="14" height="18" fill="#fff"/>
<rect x="610" y="726" width="14" height="11.8" fill="#00ff00"/>
<rect x="629" y="708" width="14" height="21" fill="#fff"/>
<rect x="629" y="729" width="14" height="8.8" fill="#00ff00"/>
<rect x="648" y="708" width="14" height="22" fill="#fff"/>
<rect x="648" y="730" width="14" height="3.6" fill="#00ff00"/>
<rect x="667" y="708" width="14" height="22" fill="#fff"/>
<rect x="667" y="730" width="14" height="0.8" fill="#00ff00"/>
<rect x="686" y="708" width="14" height="16.6" fill="#ffff00"/>
<rect x="705" y="708" width="14" height="14" fill="#ffff00"/>
<rect x="724" y="708" width="14" height="11" fill="#ffff00"/>
<rect x="742" y="708" width="14" height="2" fill="#ffff00"/>
<rect x="761" y="702.8" width="14" height="5.2" fill="#ff00ff"/>
<rect x="780" y="699" width="14" height="9" fill="#ff00ff"/>
<rect x="799" y="697.5" width="14" height="10.5" fill="#ff00ff"/>
<rect x="818" y="697.5" width="14" height="10.5" fill="#ff0000"/>
<rect x="837" y="696.7" width="14" height="8.3" fill="#ff0000"/>
<rect x="837" y="705" width="14" height="3" fill="#804000"/>
<rect x="856" y="700" width="14" height="3" fill="#ff0000"/>
<rect x="856" y="703" width="14" height="5" fill="#804000"/>
<rect x="875" y="703" width="14" height="5" fill="#804000"/>
<rect x="893" y="706" width="14" height="2" fill="#ffff00"/>
<rect x="912" y="708" width="14" height="1.5" fill="#0000ff"/>
<rect x="931" y="708" width="14" height="5.6" fill="#0000ff"/>
<line x1="14" y1="739.5" x2="938" y2="739.5" stroke="#00ff00" stroke-width="1.5" />
<polyline points="70,739 88.4,676 107,739" fill="none" stroke="#00ff00" stroke-width="1.8" />
<line x1="70" y1="739.5" x2="107" y2="739.5" stroke="#ff0000" stroke-width="1.5" />
<polyline points="617.8,739 636,676 750,676 768,739" fill="none" stroke="#ff0000" stroke-width="1.8" />
<text x="1075" y="61.5" fill="#b0b0b0" font-size="12" textLength="68" lengthAdjust="spacingAndGlyphs">300股指连续</text>
<text x="1148" y="61.5" fill="#fff" font-size="12" textLength="24" lengthAdjust="spacingAndGlyphs">分时</text>
<text x="1176" y="61.5" fill="#ffff00" font-size="12" textLength="24" lengthAdjust="spacingAndGlyphs">均线</text>
<text x="1206" y="61.5" fill="#ffff00" font-size="12" textLength="37" lengthAdjust="spacingAndGlyphs">成交量</text>
<line x1="1073" y1="65.5" x2="1208" y2="65.5" stroke="#cc0000" stroke-width="1" />
<line x1="1073" y1="91.5" x2="1208" y2="91.5" stroke="#cc0000" stroke-width="1" />
<line x1="1073" y1="118.5" x2="1208" y2="118.5" stroke="#cc0000" stroke-width="1" />
<line x1="1073" y1="144.5" x2="1208" y2="144.5" stroke="#cc0000" stroke-width="1" />
<line x1="1073" y1="171.5" x2="1208" y2="171.5" stroke="#cc0000" stroke-width="1" />
<line x1="1073" y1="197.5" x2="1208" y2="197.5" stroke="#cc0000" stroke-width="1" />
<line x1="1073" y1="223.5" x2="1208" y2="223.5" stroke="#cc0000" stroke-width="1" />
<line x1="1073" y1="250.5" x2="1208" y2="250.5" stroke="#cc0000" stroke-width="1" />
<line x1="1073" y1="276.5" x2="1208" y2="276.5" stroke="#cc0000" stroke-width="1" />
<line x1="1073" y1="303.5" x2="1208" y2="303.5" stroke="#cc0000" stroke-width="1" />
<line x1="1073" y1="329.5" x2="1208" y2="329.5" stroke="#cc0000" stroke-width="1" />
<line x1="1073" y1="355.5" x2="1208" y2="355.5" stroke="#cc0000" stroke-width="1" />
<line x1="1073" y1="382.5" x2="1208" y2="382.5" stroke="#cc0000" stroke-width="1" />
<line x1="1073" y1="171.5" x2="1208" y2="171.5" stroke="#cc0000" stroke-width="3" />
<line x1="1073" y1="276.5" x2="1208" y2="276.5" stroke="#cc0000" stroke-width="2" />
<line x1="1029" y1="382.5" x2="1250" y2="382.5" stroke="#cc0000" stroke-width="1" />
<line x1="1073.5" y1="65" x2="1073.5" y2="383" stroke="#cc0000" stroke-width="1" />
<line x1="1105.5" y1="65" x2="1105.5" y2="383" stroke="#cc0000" stroke-width="1" />
<line x1="1173.5" y1="65" x2="1173.5" y2="383" stroke="#cc0000" stroke-width="1" />
<line x1="1208.5" y1="65" x2="1208.5" y2="383" stroke="#cc0000" stroke-width="1" />
<line x1="1088.5" y1="65" x2="1088.5" y2="383" stroke="#cc0000" stroke-width="1" stroke-dasharray="1 3"/>
<line x1="1139.5" y1="65" x2="1139.5" y2="383" stroke="#cc0000" stroke-width="1" stroke-dasharray="1 3"/>
<line x1="1190.5" y1="65" x2="1190.5" y2="383" stroke="#cc0000" stroke-width="1" stroke-dasharray="1 3"/>
<text x="1071.5" y="75.5" fill="#ff4040" font-size="12" textLength="36" lengthAdjust="spacingAndGlyphs" text-anchor="end">3153.4</text>
<text x="1250" y="75.5" fill="#ff4040" font-size="12" textLength="35" lengthAdjust="spacingAndGlyphs" text-anchor="end">0.95%</text>
<text x="1071.5" y="95.3" fill="#ff4040" font-size="12" textLength="36" lengthAdjust="spacingAndGlyphs" text-anchor="end">3145.9</text>
<text x="1250" y="95.3" fill="#ff4040" font-size="12" textLength="35" lengthAdjust="spacingAndGlyphs" text-anchor="end">0.72%</text>
<text x="1071.5" y="122.4" fill="#ff4040" font-size="12" textLength="36" lengthAdjust="spacingAndGlyphs" text-anchor="end">3138.5</text>
<text x="1250" y="122.4" fill="#ff4040" font-size="12" textLength="35" lengthAdjust="spacingAndGlyphs" text-anchor="end">0.48%</text>
<text x="1071.5" y="148.4" fill="#ff4040" font-size="12" textLength="36" lengthAdjust="spacingAndGlyphs" text-anchor="end">3131.1</text>
<text x="1250" y="148.4" fill="#ff4040" font-size="12" textLength="35" lengthAdjust="spacingAndGlyphs" text-anchor="end">0.24%</text>
<text x="1071.5" y="175.8" fill="#e0e0e0" font-size="12" textLength="36" lengthAdjust="spacingAndGlyphs" text-anchor="end">3123.6</text>
<text x="1250" y="175.8" fill="#e0e0e0" font-size="12" textLength="35" lengthAdjust="spacingAndGlyphs" text-anchor="end">0.00%</text>
<text x="1071.5" y="201.4" fill="#40ff40" font-size="12" textLength="36" lengthAdjust="spacingAndGlyphs" text-anchor="end">3116.2</text>
<text x="1250" y="201.4" fill="#40ff40" font-size="12" textLength="35" lengthAdjust="spacingAndGlyphs" text-anchor="end">0.24%</text>
<text x="1071.5" y="228" fill="#40ff40" font-size="12" textLength="36" lengthAdjust="spacingAndGlyphs" text-anchor="end">3108.7</text>
<text x="1250" y="228" fill="#40ff40" font-size="12" textLength="35" lengthAdjust="spacingAndGlyphs" text-anchor="end">0.48%</text>
<text x="1071.5" y="254.5" fill="#40ff40" font-size="12" textLength="36" lengthAdjust="spacingAndGlyphs" text-anchor="end">3101.3</text>
<text x="1250" y="254.5" fill="#40ff40" font-size="12" textLength="35" lengthAdjust="spacingAndGlyphs" text-anchor="end">0.72%</text>
<text x="1071.5" y="275.8" fill="#40ff40" font-size="12" textLength="36" lengthAdjust="spacingAndGlyphs" text-anchor="end">3093.8</text>
<text x="1250" y="275.8" fill="#40ff40" font-size="12" textLength="35" lengthAdjust="spacingAndGlyphs" text-anchor="end">0.95%</text>
<text x="1071.5" y="288" fill="#c80000" font-size="12" text-anchor="end">471</text>
<text x="1250" y="288" fill="#c80000" font-size="12" text-anchor="end">471</text>
<text x="1071.5" y="308.5" fill="#c80000" font-size="12" text-anchor="end">353</text>
<text x="1250" y="308.5" fill="#c80000" font-size="12" text-anchor="end">353</text>
<text x="1071.5" y="334" fill="#c80000" font-size="12" text-anchor="end">236</text>
<text x="1250" y="334" fill="#c80000" font-size="12" text-anchor="end">236</text>
<text x="1071.5" y="360" fill="#c80000" font-size="12" text-anchor="end">118</text>
<text x="1250" y="360" fill="#c80000" font-size="12" text-anchor="end">118</text>
<text x="1071.5" y="381" fill="#c80000" font-size="12" text-anchor="end">0</text>
<text x="1250" y="381" fill="#c80000" font-size="12" text-anchor="end">0</text>
<text x="1030" y="395" fill="#c80000" font-size="12" textLength="68" lengthAdjust="spacingAndGlyphs">04/26 09:30</text>
<text x="1142" y="395" fill="#c80000" font-size="12" textLength="66" lengthAdjust="spacingAndGlyphs">10:30 15:00</text>
<polyline points="1074,120 1075,104 1077,98 1080,95 1085,96 1090,91 1093,94 1102,101 1106,102.6 1111,107 1118,110 1127,115 1132,117 1137,127 1141,132 1154,136 1166,139.4 1183.6,139.4" fill="none" stroke="#ffff00" stroke-width="1.2" />
<polyline points="1073.6,127 1074.4,108 1075.6,84 1077.6,73 1079,86 1080,78 1081.6,92 1082.4,108 1083.6,100 1085,109 1086,92 1087,79 1088.6,72.4 1090,82 1091,95 1092,114 1093,126 1095,134 1097,124 1099,140 1102,134 1103,144 1105,140 1107,154 1108,150 1109.6,168 1112.4,141 1115,150 1116.6,154 1118.4,144 1120,160 1121.6,168 1123,158 1124,164 1126.4,141 1129,150 1131.6,164 1133,184 1134,200 1136,204 1138.4,213 1139.6,218 1141.6,204 1143,200 1146.4,193 1148.4,199 1150.4,172 1152,164 1154,162.4 1156.4,163 1158,174 1159.4,171 1161,182 1162.4,180 1164,188 1165.4,192 1166.6,201 1168,198 1183.6,198" fill="none" stroke="#fff" stroke-width="1.2" />
<path d="M1072.5 382v-89.6M1073.5 382v-25.7M1074.5 382v-105.0M1075.5 382v-45.0M1076.5 382v-44.1M1077.5 382v-31.9M1078.5 382v-11.7M1079.5 382v-18.6M1080.5 382v-31.9M1081.5 382v-20.5M1082.5 382v-24.9M1083.5 382v-19.3M1084.5 382v-11.7M1085.5 382v-29.2M1086.5 382v-35.9M1087.5 382v-46.7M1088.5 382v-36.2M1089.5 382v-4.7M1090.5 382v-14.5M1091.5 382v-27.5M1092.5 382v-40.6M1093.5 382v-10.0M1094.5 382v-14.5M1095.5 382v-18.7M1096.5 382v-11.7M1097.5 382v-16.3M1098.5 382v-20.5M1099.5 382v-14.5M1100.5 382v-10.0M1101.5 382v-8.3M1102.5 382v-6.5M1103.5 382v-7.9M1104.5 382v-10.3M1105.5 382v-12.6M1106.5 382v-12.6M1107.5 382v-12.6M1108.5 382v-25.7M1109.5 382v-8.2M1110.5 382v-10.6M1111.5 382v-14.5M1112.5 382v-17.0M1113.5 382v-7.4M1114.5 382v-6.2M1115.5 382v-5.2M1116.5 382v-4.7M1117.5 382v-10.0M1118.5 382v-12.2M1119.5 382v-15.2M1120.5 382v-17.9M1121.5 382v-13.4M1122.5 382v-10.9M1123.5 382v-15.2M1124.5 382v-14.8M1125.5 382v-14.2M1126.5 382v-13.5M1127.5 382v-8.5M1128.5 382v-4.7M1129.5 382v-6.6M1130.5 382v-7.4M1131.5 382v-11.7M1132.5 382v-37.1M1133.5 382v-45.0M1134.5 382v-26.6M1135.5 382v-25.1M1136.5 382v-23.8M1137.5 382v-23.1M1138.5 382v-16.1M1139.5 382v-54.6M1140.5 382v-11.7M1141.5 382v-8.4M1142.5 382v-6.5M1143.5 382v-5.2M1144.5 382v-4.7M1145.5 382v-10.0M1146.5 382v-8.8M1147.5 382v-7.1M1148.5 382v-5.6M1149.5 382v-15.7M1150.5 382v-21.4M1151.5 382v-17.9M1152.5 382v-6.5M1153.5 382v-8.0M1154.5 382v-10.0M1155.5 382v-11.7M1156.5 382v-7.3M1157.5 382v-4.7M1158.5 382v-7.5M1159.5 382v-10.0M1160.5 382v-10.4M1161.5 382v-10.9M1162.5 382v-8.9M1163.5 382v-7.4M1164.5 382v-8.6M1165.5 382v-9.1M1166.5 382v-14.9M1167.5 382v-6.5M1168.5 382v0.0" stroke="#ffff00" stroke-width="1" fill="none" shape-rendering="crispEdges"/>
<text x="1071" y="415" fill="#ffff00" font-size="12" textLength="25" lengthAdjust="spacingAndGlyphs">IF00</text>
<text x="1103" y="415" fill="#ffff00" font-size="12" textLength="69" lengthAdjust="spacingAndGlyphs">300股指连续</text>
<g transform="translate(1213,402)"><path d="M2 1 l3 -1 l4 5 l3 4 l-1 4 h-3 l-1 -4 l-3 -2 z" fill="#fff"/><path d="M1 1 l3 1 M3 5 l-2 3" stroke="#f33" stroke-width="1.5"/><path d="M6 5 l3 5" stroke="#339" stroke-width="1.5"/></g>
<rect x="1232" y="403" width="13" height="13" fill="#008080"/>
<path d="M1235 409 l3.5 -3 l3.5 3 M1235 413.5 l3.5 -3 l3.5 3" stroke="#ffff00" stroke-width="1.6" fill="none"/>
<line x1="1030" y1="418.5" x2="1250" y2="418.5" stroke="#cc0000" stroke-width="1" />
<line x1="1030" y1="436.5" x2="1250" y2="436.5" stroke="#cc0000" stroke-width="1" />
<line x1="1030" y1="457.5" x2="1250" y2="457.5" stroke="#cc0000" stroke-width="1" />
<line x1="1030" y1="478.5" x2="1250" y2="478.5" stroke="#cc0000" stroke-width="1" />
<line x1="1030" y1="624.5" x2="1250" y2="624.5" stroke="#cc0000" stroke-width="1" />
<line x1="1055.5" y1="437" x2="1055.5" y2="478" stroke="#cc0000" stroke-width="1" />
<text x="1030.5" y="432" fill="#c8c8c8" font-size="12" textLength="24" lengthAdjust="spacingAndGlyphs">委比</text>
<text x="1128.5" y="432" fill="#ff4646" font-size="12" textLength="41" lengthAdjust="spacingAndGlyphs" text-anchor="end">33.33%</text>
<text x="1139" y="432" fill="#c8c8c8" font-size="12" textLength="24" lengthAdjust="spacingAndGlyphs">委差</text>
<text x="1248" y="432" fill="#ff4646" font-size="12" text-anchor="end">1</text>
<text x="1034" y="454" fill="#40ff40" font-size="18" textLength="18" lengthAdjust="spacingAndGlyphs">卖</text>
<text x="1138.5" y="454" fill="#40ff40" font-size="18" textLength="58" lengthAdjust="spacingAndGlyphs" text-anchor="end">3116.0</text>
<text x="1248" y="454" fill="#40ff40" font-size="18" text-anchor="end">1</text>
<text x="1034" y="475" fill="#ff4646" font-size="18" textLength="18" lengthAdjust="spacingAndGlyphs">买</text>
<text x="1138.5" y="475" fill="#40ff40" font-size="18" textLength="58" lengthAdjust="spacingAndGlyphs" text-anchor="end">3115.0</text>
<text x="1248" y="475" fill="#ff4646" font-size="18" text-anchor="end">2</text>
<text x="1030.5" y="492" fill="#c8c8c8" font-size="12" textLength="24" lengthAdjust="spacingAndGlyphs">最新</text>
<text x="1128.5" y="492" fill="#40ff40" font-size="12" text-anchor="end">3116.0</text>
<text x="1139" y="492" fill="#c8c8c8" font-size="12" textLength="24" lengthAdjust="spacingAndGlyphs">均价</text>
<text x="1248" y="492" fill="#ff4646" font-size="12" text-anchor="end">3132.4</text>
<text x="1030.5" y="508" fill="#c8c8c8" font-size="12" textLength="24" lengthAdjust="spacingAndGlyphs">涨跌</text>
<text x="1128.5" y="508" fill="#40ff40" font-size="12" text-anchor="end">-7.6</text>
<text x="1139" y="508" fill="#c8c8c8" font-size="12" textLength="24" lengthAdjust="spacingAndGlyphs">前结</text>
<text x="1248" y="508" fill="#e8e8e8" font-size="12" text-anchor="end">3123.6</text>
<text x="1030.5" y="524.5" fill="#c8c8c8" font-size="12" textLength="24" lengthAdjust="spacingAndGlyphs">幅度</text>
<text x="1128.5" y="524.5" fill="#40ff40" font-size="12" text-anchor="end">-0.24%</text>
<text x="1139" y="524.5" fill="#c8c8c8" font-size="12" textLength="24" lengthAdjust="spacingAndGlyphs">今开</text>
<text x="1248" y="524.5" fill="#ff4646" font-size="12" text-anchor="end">3130.2</text>
<text x="1030.5" y="540" fill="#c8c8c8" font-size="12" textLength="24" lengthAdjust="spacingAndGlyphs">振幅</text>
<text x="1128.5" y="540" fill="#e8e8e8" font-size="12" text-anchor="end">1.67%</text>
<text x="1139" y="540" fill="#c8c8c8" font-size="12" textLength="24" lengthAdjust="spacingAndGlyphs">最高</text>
<text x="1248" y="540" fill="#ff4646" font-size="12" text-anchor="end">3157.4</text>
<text x="1030.5" y="556" fill="#c8c8c8" font-size="12" textLength="24" lengthAdjust="spacingAndGlyphs">总手</text>
<text x="1128.5" y="556" fill="#e8e8e8" font-size="12" text-anchor="end">10,962</text>
<text x="1139" y="556" fill="#c8c8c8" font-size="12" textLength="24" lengthAdjust="spacingAndGlyphs">最低</text>
<text x="1248" y="556" fill="#40ff40" font-size="12" text-anchor="end">3105.2</text>
<text x="1030.5" y="572" fill="#c8c8c8" font-size="12" textLength="24" lengthAdjust="spacingAndGlyphs">金额</text>
<text x="1128.5" y="572" fill="#e8e8e8" font-size="12" text-anchor="end">103亿</text>
<text x="1139" y="572" fill="#c8c8c8" font-size="12" textLength="24" lengthAdjust="spacingAndGlyphs">量比</text>
<text x="1248" y="572" fill="#e8e8e8" font-size="12" text-anchor="end">0.19</text>
<text x="1030.5" y="588" fill="#c8c8c8" font-size="12" textLength="24" lengthAdjust="spacingAndGlyphs">持仓</text>
<text x="1128.5" y="588" fill="#e8e8e8" font-size="12" text-anchor="end">29,740</text>
<text x="1139" y="588" fill="#c8c8c8" font-size="12" textLength="24" lengthAdjust="spacingAndGlyphs">增仓</text>
<text x="1248" y="588" fill="#e8e8e8" font-size="12" text-anchor="end">-2,056</text>
<text x="1030.5" y="604" fill="#c8c8c8" font-size="12" textLength="24" lengthAdjust="spacingAndGlyphs">涨停</text>
<text x="1128.5" y="604" fill="#ff4646" font-size="12" text-anchor="end">3435.8</text>
<text x="1139" y="604" fill="#c8c8c8" font-size="12" textLength="24" lengthAdjust="spacingAndGlyphs">跌停</text>
<text x="1248" y="604" fill="#40ff40" font-size="12" text-anchor="end">2811.4</text>
<text x="1030.5" y="620" fill="#c8c8c8" font-size="12" textLength="24" lengthAdjust="spacingAndGlyphs">总笔</text>
<text x="1128.5" y="620" fill="#e8e8e8" font-size="12" text-anchor="end">6347</text>
<text x="1139" y="620" fill="#c8c8c8" font-size="12" textLength="24" lengthAdjust="spacingAndGlyphs">均量</text>
<text x="1248" y="620" fill="#e8e8e8" font-size="12" text-anchor="end">2</text>
<text x="1030.5" y="637.5" fill="#c8c8c8" font-size="12" textLength="24" lengthAdjust="spacingAndGlyphs">外盘</text>
<text x="1128.5" y="637.5" fill="#ff4646" font-size="12" text-anchor="end">5374</text>
<text x="1139" y="637.5" fill="#c8c8c8" font-size="12" textLength="24" lengthAdjust="spacingAndGlyphs">内盘</text>
<text x="1248" y="637.5" fill="#40ff40" font-size="12" text-anchor="end">5587</text>
<rect x="1254" y="46" width="26" height="701" fill="#f0f0f0"/>
<rect x="1254.5" y="47" width="25.5" height="422" fill="#f5f5f5"/>
<defs><linearGradient id="tbg" x1="0" y1="0" x2="0" y2="1"><stop offset="0" stop-color="#c4c4c4"/><stop offset="1" stop-color="#e4e4e4"/></linearGradient></defs>
<path d="M1255 457 h25 v12 h-21 q-4 0 -4 -4z" fill="url(#tbg)"/>
<line x1="1254.5" y1="46" x2="1254.5" y2="467" stroke="#fdfdfd" stroke-width="1" />
<path d="M1259 51.5 h14" stroke="#a0a0a0" stroke-dasharray="2 2"/><path d="M1259 53.5 h14" stroke="#c0c0c0" stroke-dasharray="2 2"/>
<rect x="1259.5" y="63.5" width="15" height="11" fill="#fffdf0" stroke="none" stroke-width="1"/>
<path d="M1259.5 64 h15 M1259.5 74 h15" stroke="#e08000" stroke-width="1.2"/><path d="M1260 66 l2.5 3 l2.5 -3 l2.5 3 l2.5 -3 l2.5 3 l1.5 -2" stroke="#e02020" fill="none"/><path d="M1261.5 73 v-2.5 M1263.5 73 v-2 M1265.5 73 v-3 M1267.5 73 v-2 M1269.5 73 v-3 M1271.5 73 v-2" stroke="#209020" stroke-width="1.2"/>
<text x="1261.5" y="94.9" fill="#000" font-size="12" textLength="13" lengthAdjust="spacingAndGlyphs">Bn</text>
<rect x="1259.5" y="107" width="15" height="11" fill="#fffdf0" stroke="none" stroke-width="1"/>
<path d="M1259.5 107 h15 M1259.5 118 h15" stroke="#e08000" stroke-width="1.2"/><path d="M1261 115 l3 -3 l3 0 l3.5 -3" stroke="#e02020" stroke-width="1.3" fill="none" stroke-dasharray="2.5 1"/><path d="M1271 110 h3 M1271 112.5 h3 M1271 115 h3" stroke="#207020" stroke-width="1.2"/>
<text x="1261.5" y="138.9" fill="#000" font-size="12" textLength="13" lengthAdjust="spacingAndGlyphs">Sn</text>
<rect x="1262.5" y="151" width="10.5" height="10.6" fill="#f4c468" stroke="#b87818" stroke-width="1"/>
<text x="1267.8" y="159.5" fill="#402000" font-size="7.5" text-anchor="middle" font-weight="bold">1'</text>
<text x="1261.5" y="181.9" fill="#000" font-size="12" textLength="13" lengthAdjust="spacingAndGlyphs">Mn</text>
<rect x="1256.5" y="189.5" width="21.5" height="20.5" fill="#dcebf9" stroke="#7eb4ea" stroke-width="1" rx="2"/>
<rect x="1262.5" y="194.7" width="10.5" height="10.6" fill="#f4c468" stroke="#b87818" stroke-width="1"/>
<text x="1267.8" y="203.2" fill="#402000" font-size="7.5" text-anchor="middle" font-weight="bold">3'</text>
<rect x="1262.5" y="216.7" width="10.5" height="10.6" fill="#f4c468" stroke="#b87818" stroke-width="1"/>
<text x="1267.8" y="225.2" fill="#402000" font-size="7.5" text-anchor="middle" font-weight="bold">5'</text>
<rect x="1262.5" y="238.7" width="10.5" height="10.6" fill="#f4c468" stroke="#b87818" stroke-width="1"/>
<text x="1267.8" y="247.2" fill="#402000" font-size="7.5" text-anchor="middle" font-weight="bold">10'</text>
<rect x="1262.5" y="260.7" width="10.5" height="10.6" fill="#f4c468" stroke="#b87818" stroke-width="1"/>
<text x="1267.8" y="269.2" fill="#402000" font-size="7.5" text-anchor="middle" font-weight="bold">15'</text>
<rect x="1262.5" y="282.7" width="10.5" height="10.6" fill="#f4c468" stroke="#b87818" stroke-width="1"/>
<text x="1267.8" y="291.2" fill="#402000" font-size="7.5" text-anchor="middle" font-weight="bold">30'</text>
<rect x="1262.5" y="304.7" width="10.5" height="10.6" fill="#f4c468" stroke="#b87818" stroke-width="1"/>
<text x="1267.8" y="313.2" fill="#402000" font-size="7.5" text-anchor="middle" font-weight="bold">1h</text>
<text x="1261.5" y="336.4" fill="#000" font-size="12" textLength="13" lengthAdjust="spacingAndGlyphs">Hn</text>
<text x="1267.5" y="358.8" fill="#000" font-size="12.5" text-anchor="middle">日</text>
<text x="1261.5" y="380.4" fill="#000" font-size="12" textLength="13" lengthAdjust="spacingAndGlyphs">Dn</text>
<text x="1267.5" y="402.8" fill="#000" font-size="12.5" text-anchor="middle">周</text>
<text x="1267.5" y="424.8" fill="#000" font-size="12.5" text-anchor="middle">月</text>
<text x="1267.5" y="446.3" fill="#000" font-size="12.5" text-anchor="middle">季</text>
<path d="M1260 461.5 l2 2 l2 -2 M1260 464.3 l2 2 l2 -2" stroke="#222" stroke-width="1.2" fill="none"/><path d="M1270 460.5 v6.4" stroke="#222" stroke-width="1.2"/><path d="M1272.2 460.5 l3.4 3.2 l-3.4 3.2 z" fill="#222"/>
<line x1="768.5" y1="118" x2="768.5" y2="436" stroke="#fff" stroke-width="1" />
<line x1="768.5" y1="482" x2="768.5" y2="636" stroke="#fff" stroke-width="1" />
<line x1="768.5" y1="675" x2="768.5" y2="740" stroke="#fff" stroke-width="1" />
<rect x="0" y="746" width="1280" height="24" fill="#ffffff"/>
<rect x="0" y="746" width="1280" height="2" fill="#a8a8a8"/>
<rect x="0" y="748" width="1280" height="3" fill="#f0f0f0"/>
<line x1="0" y1="751.5" x2="1280" y2="751.5" stroke="#d8d8d8" stroke-width="1" />
<rect x="0" y="752" width="4" height="18" fill="#d0d0d0"/>
<text x="9" y="766" fill="#000" textLength="11" lengthAdjust="spacingAndGlyphs">沪</text>
<text x="26" y="766" fill="#2e8b1e" textLength="37" lengthAdjust="spacingAndGlyphs">2941.1</text>
<text x="70" y="766" fill="#2e8b1e" textLength="40" lengthAdjust="spacingAndGlyphs">-0.19%</text>
<text x="116" y="766" fill="#2e8b1e" textLength="39" lengthAdjust="spacingAndGlyphs">(-5.55)</text>
<text x="160" y="766" fill="#000" textLength="32" lengthAdjust="spacingAndGlyphs">858亿</text>
<rect x="198.5" y="755.5" width="136" height="7" fill="#008000" stroke="#000" stroke-width="1"/>
<rect x="199" y="756" width="67" height="6" fill="#ff0000"/>
<rect x="198" y="765" width="8" height="1.6" fill="#008000"/>
<rect x="216.4" y="765" width="8" height="1.6" fill="#008000"/>
<rect x="234.8" y="765" width="8" height="1.6" fill="#008000"/>
<rect x="253.2" y="765" width="8" height="1.6" fill="#ff0000"/>
<rect x="271.6" y="765" width="8" height="1.6" fill="#ff0000"/>
<rect x="290" y="765" width="8" height="1.6" fill="#ff0000"/>
<rect x="308.4" y="765" width="8" height="1.6" fill="#008000"/>
<rect x="326.8" y="765" width="8" height="1.6" fill="#008000"/>
<text x="345" y="766" fill="#000" textLength="11" lengthAdjust="spacingAndGlyphs">深</text>
<text x="362" y="766" fill="#ff0000" textLength="34" lengthAdjust="spacingAndGlyphs">10108</text>
<text x="402" y="766" fill="#ff0000" textLength="43" lengthAdjust="spacingAndGlyphs">+0.01%</text>
<text x="451" y="766" fill="#ff0000" textLength="43" lengthAdjust="spacingAndGlyphs">(+0.85)</text>
<text x="500" y="766" fill="#000" textLength="39" lengthAdjust="spacingAndGlyphs">1621亿</text>
<rect x="545.5" y="755.5" width="124" height="7" fill="#008000" stroke="#000" stroke-width="1"/>
<rect x="546" y="756" width="62" height="6" fill="#ff0000"/>
<rect x="545" y="765" width="7.5" height="1.6" fill="#008000"/>
<rect x="561.7" y="765" width="7.5" height="1.6" fill="#008000"/>
<rect x="578.4" y="765" width="7.5" height="1.6" fill="#008000"/>
<rect x="595.1" y="765" width="7.5" height="1.6" fill="#ff0000"/>
<rect x="611.8" y="765" width="7.5" height="1.6" fill="#008000"/>
<rect x="628.5" y="765" width="7.5" height="1.6" fill="#008000"/>
<rect x="645.2" y="765" width="7.5" height="1.6" fill="#ff0000"/>
<rect x="661.9" y="765" width="7.5" height="1.6" fill="#008000"/>
<text x="681" y="766" fill="#000" textLength="21" lengthAdjust="spacingAndGlyphs">300</text>
<text x="708" y="766" fill="#2e8b1e" textLength="38" lengthAdjust="spacingAndGlyphs">3156.7</text>
<text x="752" y="766" fill="#2e8b1e" textLength="40" lengthAdjust="spacingAndGlyphs">-0.17%</text>
<text x="797" y="766" fill="#2e8b1e" textLength="39" lengthAdjust="spacingAndGlyphs">(-5.36)</text>
<text x="841" y="766" fill="#000" textLength="32" lengthAdjust="spacingAndGlyphs">448亿</text>
<rect x="879.5" y="755.5" width="126" height="7" fill="#008000" stroke="#000" stroke-width="1"/>
<rect x="880" y="756" width="63" height="6" fill="#ff0000"/>
<rect x="879" y="765" width="7.5" height="1.6" fill="#008000"/>
<rect x="896" y="765" width="7.5" height="1.6" fill="#008000"/>
<rect x="913" y="765" width="7.5" height="1.6" fill="#008000"/>
<rect x="930" y="765" width="7.5" height="1.6" fill="#008000"/>
<rect x="947" y="765" width="7.5" height="1.6" fill="#ff0000"/>
<rect x="964" y="765" width="7.5" height="1.6" fill="#ff0000"/>
<rect x="981" y="765" width="7.5" height="1.6" fill="#ff0000"/>
<rect x="998" y="765" width="7.5" height="1.6" fill="#008000"/>
<line x1="1013.5" y1="753" x2="1013.5" y2="769" stroke="#d0d0d0" stroke-width="1" />
<line x1="1100.5" y1="753" x2="1100.5" y2="769" stroke="#d0d0d0" stroke-width="1" />
<line x1="1130.5" y1="753" x2="1130.5" y2="769" stroke="#d0d0d0" stroke-width="1" />
<line x1="1159.5" y1="753" x2="1159.5" y2="769" stroke="#d0d0d0" stroke-width="1" />
<line x1="1189.5" y1="753" x2="1189.5" y2="769" stroke="#d0d0d0" stroke-width="1" />
<line x1="1218.5" y1="753" x2="1218.5" y2="769" stroke="#d0d0d0" stroke-width="1" />
<g transform="translate(1108,753)"><circle cx="7" cy="7" r="5.5" fill="#7ec8e8" stroke="#246"/><path d="M3 4 q4 3 8 0 M3 10 q4 -3 8 0 M7 1.5 v11" stroke="#246" fill="none" stroke-width=".8"/><path d="M2 2 l4 4" stroke="#222" stroke-width="2"/><path d="M5 14 h6" stroke="#333"/></g>
<g transform="translate(1138,753)"><path d="M7 1.5 q4 1 4.5 9 l1.5 2 h-12 l1.5 -2 q.5 -8 4.5 -9z" fill="#b8b8b8" stroke="#333" stroke-width=".9"/><circle cx="7" cy="14" r="1.3" fill="#333"/></g>
<g transform="translate(1166,753)"><path d="M1 7 l7 -5 l8 5 l-7 5 z" fill="#f0e060" stroke="#664" stroke-width=".9"/><path d="M1 7 v2 l8 5 l7 -5 v-2" fill="#c8b840" stroke="#664" stroke-width=".9"/><path d="M5 7 l4 -2.5 l4 2.5 l-4 2.5z" fill="#fff8c0" stroke="#886" stroke-width=".6"/></g>
<g transform="translate(1197,752)"><path d="M2 4 l3 -3 h7 v12 l-3 3 h-7 z" fill="#c8c8c8" stroke="#555" stroke-width=".9"/><path d="M2 4 h7 l3 -3 M9 4 v12 M3 9 h5" stroke="#555" stroke-width=".9" fill="none"/></g>
<text x="1224" y="765.6" fill="#000" textLength="49.5" lengthAdjust="spacingAndGlyphs">14:21:06</text>
</svg>
<div id="tb">
<i class="abs" style="left:0;top:0;width:21px;height:21px;background:#a3bbd9"></i>
<svg class="abs" style="left:3px;top:2px" width="16" height="16" viewBox="0 0 16 16"><rect x="0" y="0" width="16" height="16" fill="#f00"/><rect x="2" y="2" width="12" height="12" fill="#fff"/><rect x="4" y="6.5" width="3.5" height="5" fill="none" stroke="#f00" stroke-width="1"/><path d="M5.2 10.2 L11.5 4.5" stroke="#f00" stroke-width="2.4"/><rect x="12" y="7" width="1.2" height="1.2" fill="#f00"/></svg>
<div class="abs ttl" style="left:23px;top:1px">金字塔决策交易系统 - [免费登录] - [股指3m模型]</div>
<div class="abs tbtn red" style="left:581px;width:48px">股票池</div>
<div class="abs tbtn" style="left:640px;width:43px">锁定</div>
<div class="abs tbtn" style="left:690px;width:42px">客服</div>
<div class="abs tbtn red" style="left:740px;width:52px">策略库</div>
<div class="abs tbtn" style="left:800px;width:43px">公式</div>
<div class="abs tbtn red" style="left:850px;width:43px">购买</div>
<div class="abs tbtn" style="left:900px;width:42px">帐户</div>
<div class="abs tbtn red" style="left:950px;width:43px">委托</div>
<div class="abs tbtn" style="left:1000px;width:42px">网站</div>
<div class="abs tbtn" style="left:1050px;width:42px">资讯</div>
<div class="abs tbtn" style="left:1100px;width:42px">行情</div>
<div class="abs wc" style="left:1219px"><i style="left:5px;top:11px;width:8px;height:3px;background:#000"></i></div>
<div class="abs wc" style="left:1238px;width:19px"><i style="left:6px;top:3px;width:7px;height:6px;border:1px solid #000;border-top-width:2px;box-sizing:border-box"></i><i style="left:3px;top:6px;width:8px;height:7px;border:1px solid #000;border-top-width:2px;background:#fff;box-sizing:border-box"></i></div>
<div class="abs wc" style="left:1259px;width:19px"><svg class="abs" style="left:3px;top:3px" width="11" height="10" viewBox="0 0 11 10"><path d="M1 0.5 L10 9.5 M10 0.5 L1 9.5" stroke="#000" stroke-width="2.2"/></svg></div>
</div>
<div id="mb">
<i class="abs" style="left:4px;top:7px;width:2px;height:2px;background:#a0a0a0;box-shadow:0 4px #a0a0a0,0 8px #a0a0a0,1px 1px #fff,1px 5px #fff,1px 9px #fff"></i>
<svg class="abs" style="left:10px;top:3px" width="20" height="18" viewBox="0 0 20 18"><rect x="5.5" y="1.5" width="13" height="15" fill="#fff" stroke="#000" stroke-width="1"/><rect x="5" y="1" width="14" height="2.5" fill="#00007a"/><path d="M12 8.5h5M12 11.5h5" stroke="#a0a0a0" stroke-width="1.6"/><rect x="0" y="2" width="12" height="12" fill="#f00"/><rect x="2" y="4" width="8" height="8" fill="#fff"/><path d="M3 11 L9 5" stroke="#f00" stroke-width="2.2"/><rect x="3" y="5" width="2" height="1.5" fill="#f00"/><rect x="7.5" y="9.5" width="2" height="1.5" fill="#f00"/></svg>
<div class="abs mi" style="left:36px">文件(<u>F</u>)</div>
<div class="abs mi" style="left:91px">板块(<u>M</u>)</div>
<div class="abs mi" style="left:148px">画面(<u>P</u>)</div>
<div class="abs mi" style="left:205px">查看(<u>V</u>)</div>
<div class="abs mi" style="left:262px">交易(<u>O</u>)</div>
<div class="abs mi" style="left:320px">分析(<u>A</u>)</div>
<div class="abs mi" style="left:377px">工具(<u>T</u>)</div>
<div class="abs mi" style="left:434px">窗口(<u>W</u>)</div>
<div class="abs mi" style="left:495px">帮助(<u>H</u>)</div>
<i class="abs" style="left:1235px;top:17px;width:6px;height:2px;background:#000"></i>
<svg class="abs" style="left:1250px;top:11px" width="10" height="9" viewBox="0 0 12 11"><path d="M3.5 1 h6 v6 h-2 M3.5 1.8 h6" stroke="#000" stroke-width="1.4" fill="none"/><path d="M1 4.5 h6 v5.5 h-6 z M1 5.2 h6" stroke="#000" stroke-width="1.4" fill="#f0f0f0"/></svg>
<svg class="abs" style="left:1266px;top:12px" width="8" height="8" viewBox="0 0 10 10"><path d="M1 1 L9 9 M9 1 L1 9" stroke="#000" stroke-width="2.2"/></svg>
</div>
<div id="tk">
<div class="abs tkb" style="left:60px"></div>
<div class="abs tkb" style="left:106px"></div>
<div class="abs tkb" style="left:152px"></div>
<div class="abs tkb" style="left:198px"></div>
<div class="abs tkb" style="left:244px"></div>
<div class="abs tkb" style="left:290px"></div>
<div class="abs tkb" style="left:336px"></div>
</div>
<div id="dlg">
<div class="abs dt">数据接收</div>
<div class="abs dx"><svg width="46" height="19" viewBox="0 0 46 19"><path d="M20 6 L28 13 M28 6 L20 13" stroke="#4a4a5a" stroke-width="4.4" stroke-linecap="square"/><path d="M20 6 L28 13 M28 6 L20 13" stroke="#fff" stroke-width="2.6" stroke-linecap="square"/></svg></div>
<div id="dc">
<div class="abs page" style="left:6px;top:26px;width:486px;height:350px"></div>
<div class="abs tab act" style="left:8px;top:8px;width:51px;height:20px"><span style="left:6px;top:2px">连接</span></div>
<div class="abs tab" style="left:59px;top:10px;width:70px;height:16px"><span style="left:3px;top:2px">批量补数据</span></div>
<div class="abs tab" style="left:129px;top:10px;width:83px;height:16px"><span style="left:3px;top:2px">自定义补数据</span></div>
<div class="abs tab" style="left:212px;top:10px;width:60px;height:16px"><span style="left:3px;top:2px">多档订阅</span></div>
<div class="abs rt" style="left:22px;top:37px">请从下列全推行情服务器列表选择一个最快的服务器，然后点<span class="q">“</span>连接<span class="q">”</span>按钮，<br>如果你不知道哪个服务器最快，请点击<span class="q">“</span>测速<span class="q">”</span>按钮。可同时连接多个不同种<br>类的行情服务器<span class="a">,</span>如果你需要同时看期货和股票<span class="a">,</span>那么请同时连接这两台服务器<span class="a">.</span><br>如果所有服务器均无法连接<span class="a">,</span>请关闭杀毒软件和防火墙后再试<span class="a">.</span></div>
<div class="abs lv" style="left:23px;top:99px;width:331px;height:188px">
<div class="abs lh" style="left:0;top:0;width:315px;height:23px"></div>
<i class="abs" style="left:159px;top:3px;width:1px;height:18px;background:#a0a0a0;box-shadow:1px 0 #fff"></i>
<i class="abs" style="left:256px;top:3px;width:1px;height:18px;background:#a0a0a0;box-shadow:1px 0 #fff"></i>
<i class="abs" style="left:301px;top:3px;width:1px;height:18px;background:#a0a0a0;box-shadow:1px 0 #fff"></i>
<span class="abs s hd" style="left:7px;top:8px">服务器名称</span>
<span class="abs s hd" style="left:225px;top:8px">状态</span>
<span class="abs s hd" style="left:271px;top:8px">连接</span>
<div class="abs row" style="top:25px;height:13px"><span class="abs s" style="left:4px;top:0">电信线路全推<span class="a">(</span>期货<span class="a">Level 2)</span></span><span class="abs s" style="left:191px;top:0"></span><span class="abs s" style="left:271px;top:0">手动</span></div>
<i class="abs" style="left:0;top:37px;width:315px;height:1px;background:#f0f0f0"></i>
<div class="abs row" style="top:38px;height:13px"><span class="abs s" style="left:4px;top:0">网通线路全推<span class="a">(</span>期货<span class="a">Level 2)</span></span><span class="abs s" style="left:191px;top:0"></span><span class="abs s" style="left:271px;top:0">手动</span></div>
<i class="abs" style="left:0;top:50px;width:315px;height:1px;background:#f0f0f0"></i>
<div class="abs row" style="top:51px;height:13px"><span class="abs s" style="left:4px;top:0">上海电信全推<span class="a">1(</span>期货<span class="a">)</span></span><span class="abs s" style="left:191px;top:0">试用户已满</span><span class="abs s" style="left:271px;top:0">手动</span></div>
<i class="abs" style="left:0;top:63px;width:315px;height:1px;background:#f0f0f0"></i>
<div class="abs row" style="top:64px;height:13px"><span class="abs s" style="left:4px;top:0">天津网通全推<span class="a">1(</span>期货<span class="a">)</span></span><span class="abs s" style="left:191px;top:0"></span><span class="abs s" style="left:271px;top:0">手动</span></div>
<i class="abs" style="left:0;top:76px;width:315px;height:1px;background:#f0f0f0"></i>
<div class="abs row" style="top:77px;height:13px"><span class="abs s" style="left:4px;top:0">上海电信全推<span class="a">2(</span>免费期货<span class="a">)</span></span><span class="abs s" style="left:191px;top:0"></span><span class="abs s" style="left:271px;top:0">手动</span></div>
<i class="abs" style="left:0;top:89px;width:315px;height:1px;background:#f0f0f0"></i>
<div class="abs row sel" style="top:90px;height:13px"><span class="abs s" style="left:4px;top:0">北京网通全推<span class="a">2(</span>免费期货<span class="a">)</span></span><span class="abs s" style="left:191px;top:0"></span><span class="abs s" style="left:271px;top:0">手动</span></div>
<div class="abs row" style="top:103px;height:13px"><span class="abs s" style="left:4px;top:0">上海电信全推<span class="a">1(</span>股票<span class="a">)</span></span><span class="abs s" style="left:191px;top:0"></span><span class="abs s" style="left:271px;top:0">手动</span></div>
<i class="abs" style="left:0;top:115px;width:315px;height:1px;background:#f0f0f0"></i>
<div class="abs row" style="top:116px;height:13px"><span class="abs s" style="left:4px;top:0">天津网通全推<span class="a">1(</span>股票<span class="a">)</span></span><span class="abs s" style="left:191px;top:0"></span><span class="abs s" style="left:271px;top:0">手动</span></div>
<i class="abs" style="left:0;top:128px;width:315px;height:1px;background:#f0f0f0"></i>
<div class="abs row" style="top:129px;height:13px"><span class="abs s" style="left:4px;top:0">上海电信全推<span class="a">2(</span>免费股票<span class="a">)</span></span><span class="abs s" style="left:191px;top:0"></span><span class="abs s" style="left:271px;top:0">手动</span></div>
<i class="abs" style="left:0;top:141px;width:315px;height:1px;background:#f0f0f0"></i>
<div class="abs row" style="top:142px;height:13px"><span class="abs s" style="left:4px;top:0">北京网通全推<span class="a">2(</span>免费股票<span class="a">)</span></span><span class="abs s" style="left:191px;top:0"></span><span class="abs s" style="left:271px;top:0">手动</span></div>
<i class="abs" style="left:0;top:154px;width:315px;height:1px;background:#f0f0f0"></i>
<div class="abs row" style="top:155px;height:13px"><span class="abs s" style="left:4px;top:0">上海双通全推<span class="a">(</span>外汇外盘<span class="a">)</span></span><span class="abs s" style="left:191px;top:0"></span><span class="abs s" style="left:271px;top:0">手动</span></div>
<i class="abs" style="left:0;top:167px;width:315px;height:1px;background:#f0f0f0"></i>
<div class="abs row" style="top:168px;height:13px"><span class="abs s" style="left:4px;top:0">杭州网通全推<span class="a">(</span>期货<span class="a">)</span></span><span class="abs s" style="left:191px;top:0"></span><span class="abs s" style="left:271px;top:0">手动</span></div>
<i class="abs" style="left:0;top:180px;width:315px;height:1px;background:#f0f0f0"></i>
<i class="abs" style="left:159px;top:21px;width:1px;height:150px;background:#f0f0f0"></i>
<i class="abs" style="left:256px;top:21px;width:1px;height:150px;background:#f0f0f0"></i>
<i class="abs" style="left:301px;top:21px;width:1px;height:150px;background:#f0f0f0"></i>
<div class="abs vs" style="left:315px;top:0;width:16px;height:172px"></div>
<i class="abs arr" style="left:319px;top:8px;border-bottom:4px solid #555;border-left:4px solid transparent;border-right:4px solid transparent"></i>
<i class="abs arr" style="left:319px;top:160px;border-top:4px solid #555;border-left:4px solid transparent;border-right:4px solid transparent"></i>
<div class="abs thumb" style="left:316px;top:21px;width:13px;height:119px"><i class="abs" style="left:2px;top:56px;width:7px;height:1px;background:#666;box-shadow:0 2px #666,0 4px #666,0 6px #666"></i></div>
<div class="abs hs" style="left:0;top:172px;width:315px;height:16px"></div>
<div class="abs" style="left:315px;top:172px;width:16px;height:16px;background:#f0f0f0"></div>
<i class="abs arr" style="left:7px;top:176px;border-right:4px solid #555;border-top:4px solid transparent;border-bottom:4px solid transparent"></i>
<i class="abs arr" style="left:304px;top:176px;border-left:4px solid #555;border-top:4px solid transparent;border-bottom:4px solid transparent"></i>
<div class="abs thumbh" style="left:20px;top:173px;width:240px;height:13px"><i class="abs" style="left:116px;top:3px;width:1px;height:7px;background:#666;box-shadow:2px 0 #666,4px 0 #666,6px 0 #666"></i></div>
</div>
<div class="abs btn" style="left:361px;top:99.5px">连接<span class="a">(C)</span></div>
<div class="abs btn dis" style="left:361px;top:126.5px">断开<span class="a">(D)</span></div>
<div class="abs btn" style="left:361px;top:157px">全部断开<span class="a">(F)</span></div>
<div class="abs btn" style="left:361px;top:183.5px">设为自动<span class="a">(E)</span></div>
<div class="abs btn" style="left:361px;top:220px">测速<span class="a">(T)</span></div>
<div class="abs btn" style="left:361px;top:252px">隐藏<span class="a">(U)..</span></div>
<div class="abs cb" style="left:22px;top:301px"><span class="box"><svg class="abs" style="left:1px;top:1px" width="11" height="11" viewBox="0 0 11 11"><path d="M2 4.6 l2.4 2.8 l4.6 -5.4" stroke="#000" stroke-width="2.2" fill="none"/></svg></span><span class="lbl">断线重连<span class="a">(R)</span></span></div>
<div class="abs cb" style="left:113px;top:301px"><span class="box"><svg class="abs" style="left:1px;top:1px" width="11" height="11" viewBox="0 0 11 11"><path d="M2 4.6 l2.4 2.8 l4.6 -5.4" stroke="#000" stroke-width="2.2" fill="none"/></svg></span><span class="lbl">自动连接<span class="a">(A)</span></span></div>
<div class="abs cb" style="left:200px;top:301px"><span class="box"><svg class="abs" style="left:1px;top:1px" width="11" height="11" viewBox="0 0 11 11"><path d="M2 4.6 l2.4 2.8 l4.6 -5.4" stroke="#000" stroke-width="2.2" fill="none"/></svg></span><span class="lbl">自动更换服务器<span class="a">(G)</span></span></div>
<div class="abs cb" style="left:22px;top:319px"><span class="box"><svg class="abs" style="left:1px;top:1px" width="11" height="11" viewBox="0 0 11 11"><path d="M2 4.6 l2.4 2.8 l4.6 -5.4" stroke="#000" stroke-width="2.2" fill="none"/></svg></span><span class="lbl">断线跳出窗口<span class="a">(W)</span></span></div>
<div class="abs cb" style="left:136px;top:319px"><span class="box"></span><span class="lbl">自动隐藏<span class="a">(H)</span></span></div>
<div class="abs cb" style="left:22px;top:337px"><span class="box"><svg class="abs" style="left:1px;top:1px" width="11" height="11" viewBox="0 0 11 11"><path d="M2 4.6 l2.4 2.8 l4.6 -5.4" stroke="#000" stroke-width="2.2" fill="none"/></svg></span><span class="lbl">允许使用双数据<span class="a">(</span>网络状态差时勿用<span class="a">)</span></span></div>
</div>
</div>
<div id="ann"></div>
<svg class="abs" style="left:0;top:0;z-index:5" width="1280" height="800" viewBox="0 0 1280 800" font-family='"Liberation Sans","Noto Sans CJK SC",sans-serif' font-size="13">
<rect x="605.5" y="657" width="161.5" height="24" fill="#f3f8fd" stroke="#d4e2f2" stroke-width="1" rx="1"/>
<defs><linearGradient id="sg" x1="0" y1="0" x2="0.3" y2="1"><stop offset="0" stop-color="#f8743a"/><stop offset="1" stop-color="#ee4408"/></linearGradient></defs>
<path d="M583.2 658.4 L602.6 654.2 Q604.4 653.8 604.9 655.6 L609.9 672 Q610.4 673.7 608.6 674.3 L589.4 680.6 Q587.6 681.1 587.1 679.4 L581.9 660.4 Q581.5 658.8 583.2 658.4 Z" fill="url(#sg)"/>
<text x="596" y="675.6" fill="#fff" font-size="24" textLength="21" lengthAdjust="spacingAndGlyphs" text-anchor="middle" font-weight="bold" font-style="italic" transform="rotate(-13 596 668) translate(0 0)">S</text>
<text x="615.6" y="675.3" fill="#1f6fcf" font-size="15.5" textLength="14.6" lengthAdjust="spacingAndGlyphs" font-weight="bold">中</text>
<path d="M648.4 663 A6.85 6.85 0 1 1 639 672.2 A8.5 8.5 0 0 0 648.4 663 Z" fill="#1f6fcf"/>
<circle cx="663.4" cy="666.5" r="1.75" fill="none" stroke="#1f6fcf" stroke-width="1.5"/><path d="M670 668.1 a1.9 1.9 0 0 1 1.9 1.9 q0 3 -3.6 4.7 q1.8 -1.6 1.6 -2.9 a1.9 1.9 0 0 1 .1 -3.7z" fill="#1f6fcf"/>
<rect x="681.2" y="663" width="16" height="11.9" fill="#1f6fcf" stroke="none" stroke-width="1" rx="1.8"/>
<path d="M683.4 666 h1.6 M686.4 666 h1.6 M689.4 666 h1.6 M692.4 666 h1.6 M683.4 668.8 h1.6 M686.4 668.8 h1.6 M689.4 668.8 h1.6 M692.4 668.8 h1.6 M685 672 h8.4" stroke="#fff" stroke-width="1.5"/>
<circle cx="711.4" cy="664.8" r="3.3" fill="#b4bcc8"/><path d="M705 676.4 q0 -7.4 6.4 -7.4 q3.2 0 4.4 2.2 h-3.4 v5.2z" fill="#b4bcc8"/><rect x="712.6" y="671.4" width="8.4" height="6.2" rx="1" fill="#e4e8ee" stroke="#a8b0bc" stroke-width=".9"/><path d="M714.4 673.4 v2.6 M716.6 673.2 h2.6 v2.8 h-2.6 M716.6 674.6 h2.4" stroke="#8a94a4" stroke-width=".8" fill="none"/>
<path d="M726 664.7 l4.6 -2.5 q2.7 2.1 5.4 0 l4.6 2.5 l-2 3.6 l-2.1 -1 v8.5 h-6.4 v-8.5 l-2.1 1z" fill="#1f6fcf"/>
<g transform="translate(746.5,660.5)"><path d="M12.3 1 a4.4 4.4 0 0 0 -5.3 5.8 l-6 6.4 a1.7 1.7 0 0 0 2.5 2.5 l6 -6.4 a4.4 4.4 0 0 0 5.8 -5.3 l-2.9 2.9 l-2.5 -.5 l-.5 -2.5 z" fill="#1f6fcf"/></g>
<defs><radialGradient id="orb" cx=".5" cy=".35" r=".7"><stop offset="0" stop-color="#9fd4f5"/><stop offset=".55" stop-color="#2d78c0"/><stop offset="1" stop-color="#133d7a"/></radialGradient></defs>
<rect x="0" y="770" width="59" height="30" fill="#8ea9c8" stroke="none" stroke-width="1" opacity=".55"/>
<circle cx="27.5" cy="784.5" r="18.8" fill="url(#orb)" stroke="#d4e6f5" stroke-width="1.4"/>
<g transform="translate(0,-2)"><path d="M18.5 779 q4 -3 8 -1 l-1.5 7 q-4 -2 -8 1 z" fill="#e8542a"/><path d="M28 778.5 q4 2 8.5 -1 l-1.5 7 q-4 3 -8.5 1 z" fill="#8cc63f"/><path d="M16.5 787.5 q4 -3 8 -1 l-1.5 7 q-4 -2 -8 1 z" fill="#3d9be0"/><path d="M26 787 q4 2 8.5 -1 l-1.5 7 q-4 3 -8.5 1 z" fill="#f8c020"/></g>
<g transform="translate(0,-1)">
<circle cx="81.2" cy="786" r="8" fill="#ee7a12"/><circle cx="80.2" cy="784" r="5" fill="#f59a3a"/><path d="M76.2 789 q1 -6 5 -7 l1 -2 l1 2 q3 1 3 4 l-2 -1 q-1 3 -4 3 q-2 2 -4 1z" fill="#fff3e0"/>
<rect x="119.2" y="778" width="16" height="16" fill="#fff" stroke="#1d7a36" stroke-width="1.2"/>
<rect x="128.2" y="780" width="6" height="12" fill="#cfe8d0"/>
<path d="M122.2 781 l8 10 M130.2 781 l-8 10" stroke="#1d7a36" stroke-width="2.8"/>
<path d="M165.2 791 q-1 -9 11 -12 q-5 3 -5 7 q0 3 3 3 q-4 4 -9 2z" fill="#e02010"/><path d="M181.2 781 q1 9 -11 12 q5 -3 5 -7 q0 -3 -3 -3 q4 -4 9 -2z" fill="#1a3fa0"/>
<defs><linearGradient id="rg" x1="0" y1="0" x2="0" y2="1"><stop offset="0" stop-color="#f08080"/><stop offset="1" stop-color="#c81818"/></linearGradient></defs>
<rect x="211.2" y="778" width="16" height="16" fill="url(#rg)"/>
<path d="M214.2 781 q1 6 5 6 q4 -1 6 -6 q0 8 -5 9 l0 3 h-3 l0 -4 q-3 -2 -3 -8z" fill="#fff"/>
<rect x="258.4" y="779.2" width="13.6" height="13.6" fill="#fff" stroke="#f00" stroke-width="2.4"/>
<rect x="261.7" y="784" width="3" height="4" fill="none" stroke="#f00" stroke-width="1"/>
<path d="M262.7 787.5 L268.7 782.5" stroke="#f00" stroke-width="2.2"/>
<path d="M302.2 785 h3 v2 h-3z M303.2 788 l3 -2 v4 h-2z M307.2 783 h2 v7 h-2z M310.2 785 h3 l1 2 l2 -4 v5 l2 2 h-3 l-2 -2 l-2 2 h-2z" fill="#0a50d0"/>
<text x="314.2" y="784" fill="#e00000" font-size="6.5" font-weight="bold">50</text>
<defs><linearGradient id="og" x1="0" y1="0" x2="1" y2="1"><stop offset="0" stop-color="#ff7a1a"/><stop offset="1" stop-color="#ffb020"/></linearGradient></defs>
<rect x="349.2" y="778" width="16" height="16" fill="url(#og)" stroke="none" stroke-width="1" rx="3.5"/>
<path d="M352.2 792 q-2 -5 1 -9 q2 -3 5 -1 q-3 0 -3 3 q0 2 2 2 q0 -4 3 -5 l1 -1.5 l.5 1.5 q2 1 2 3 l-2 0 q0 2 -1.5 3 q2 1 1 4 z" fill="#fff"/>
</g>
<defs><linearGradient id="trg" x1="0" y1="0" x2="0" y2="1"><stop offset="0" stop-color="#a4bbd4"/><stop offset=".5" stop-color="#90aac7"/><stop offset="1" stop-color="#88a2c0"/></linearGradient></defs>
<path d="M1013.5 800 V779 Q1013.5 771.5 1021 771.5 H1280 V800 Z" fill="url(#trg)" stroke="#7690b0" stroke-width="1"/>
<defs><linearGradient id="bg" x1="0" y1="0" x2="0" y2="1"><stop offset="0" stop-color="#2a9a50"/><stop offset="1" stop-color="#0a6a28"/></linearGradient></defs>
<rect x="1028" y="776.2" width="45.5" height="18" fill="url(#bg)" stroke="#101010" stroke-width="2"/>
<rect x="1074" y="780.5" width="3.2" height="9.5" fill="#101010"/>
<text x="1050.8" y="790" fill="#fff" textLength="31" lengthAdjust="spacingAndGlyphs" text-anchor="middle">100%</text>
<g stroke-linejoin="round"><path d="M1091.5 780.5 h6.5 v2 h4.5 v2.6 h-4.5 v1.8 h4.5 v2.6 h-4.5 v2 h-6.5 q-4 0 -4 -5.5 q0 -5.5 4 -5.5z" fill="#111" stroke="#fff" stroke-width="2.2" paint-order="stroke"/></g>
<line x1="1110.5" y1="772" x2="1110.5" y2="800" stroke="#6f89a9" stroke-width="1" />
<line x1="1111.5" y1="772" x2="1111.5" y2="800" stroke="#b4c8de" stroke-width="1" />
<path d="M1118 788 l4 -5 l4 5 z" fill="#fff" stroke="#667" stroke-width=".6"/>
<g transform="translate(1139,777)"><rect x="1" y="3" width="10" height="13" fill="#fff" stroke="#333"/><path d="M4 1 v5 M8 1 v5 M3 6 h7 v4 h-2 v4" stroke="#333" stroke-width="1.4" fill="none"/><path d="M11 6 h3 v8 h-3" stroke="#333" fill="#ddd"/></g>
<g transform="translate(1163,778)"><path d="M1 14 h2 v-2 h-2z M4.5 14 h2 v-4 h-2z M8 14 h2 v-7 h-2z M11.5 14 h2 v-10 h-2z M15 14 h2 v-13 h-2z" fill="#9aa8b8" stroke="#556" stroke-width=".4"/><circle cx="10" cy="10" r="3.5" fill="#f8a020"/><path d="M10 4.5 v11 M4.5 10 h11 M6 6 l8 8 M14 6 l-8 8" stroke="#f8a020" stroke-width="1"/></g>
<g transform="translate(1187,778)"><path d="M1 5 h3 l4 -4 v14 l-4 -4 h-3 z" fill="#fff" stroke="#333" stroke-width=".9"/><path d="M10.5 4.5 q2.5 3.5 0 7 M13 2.5 q4 5.5 0 11" stroke="#fff" fill="none" stroke-width="1.3"/><path d="M10.5 4.5 q2.5 3.5 0 7 M13 2.5 q4 5.5 0 11" stroke="#445" fill="none" stroke-width=".5"/></g>
<text x="1223" y="790.2" fill="#ffffff" font-size="12.5" textLength="30" lengthAdjust="spacingAndGlyphs">14:21</text>
<rect x="1266.5" y="771.5" width="14" height="29" fill="#a9bfd8" stroke="#61799a" stroke-width="1"/>
<line x1="1267.5" y1="772" x2="1267.5" y2="800" stroke="#c8d8e8" stroke-width="1" />
</svg>
</body></html>
